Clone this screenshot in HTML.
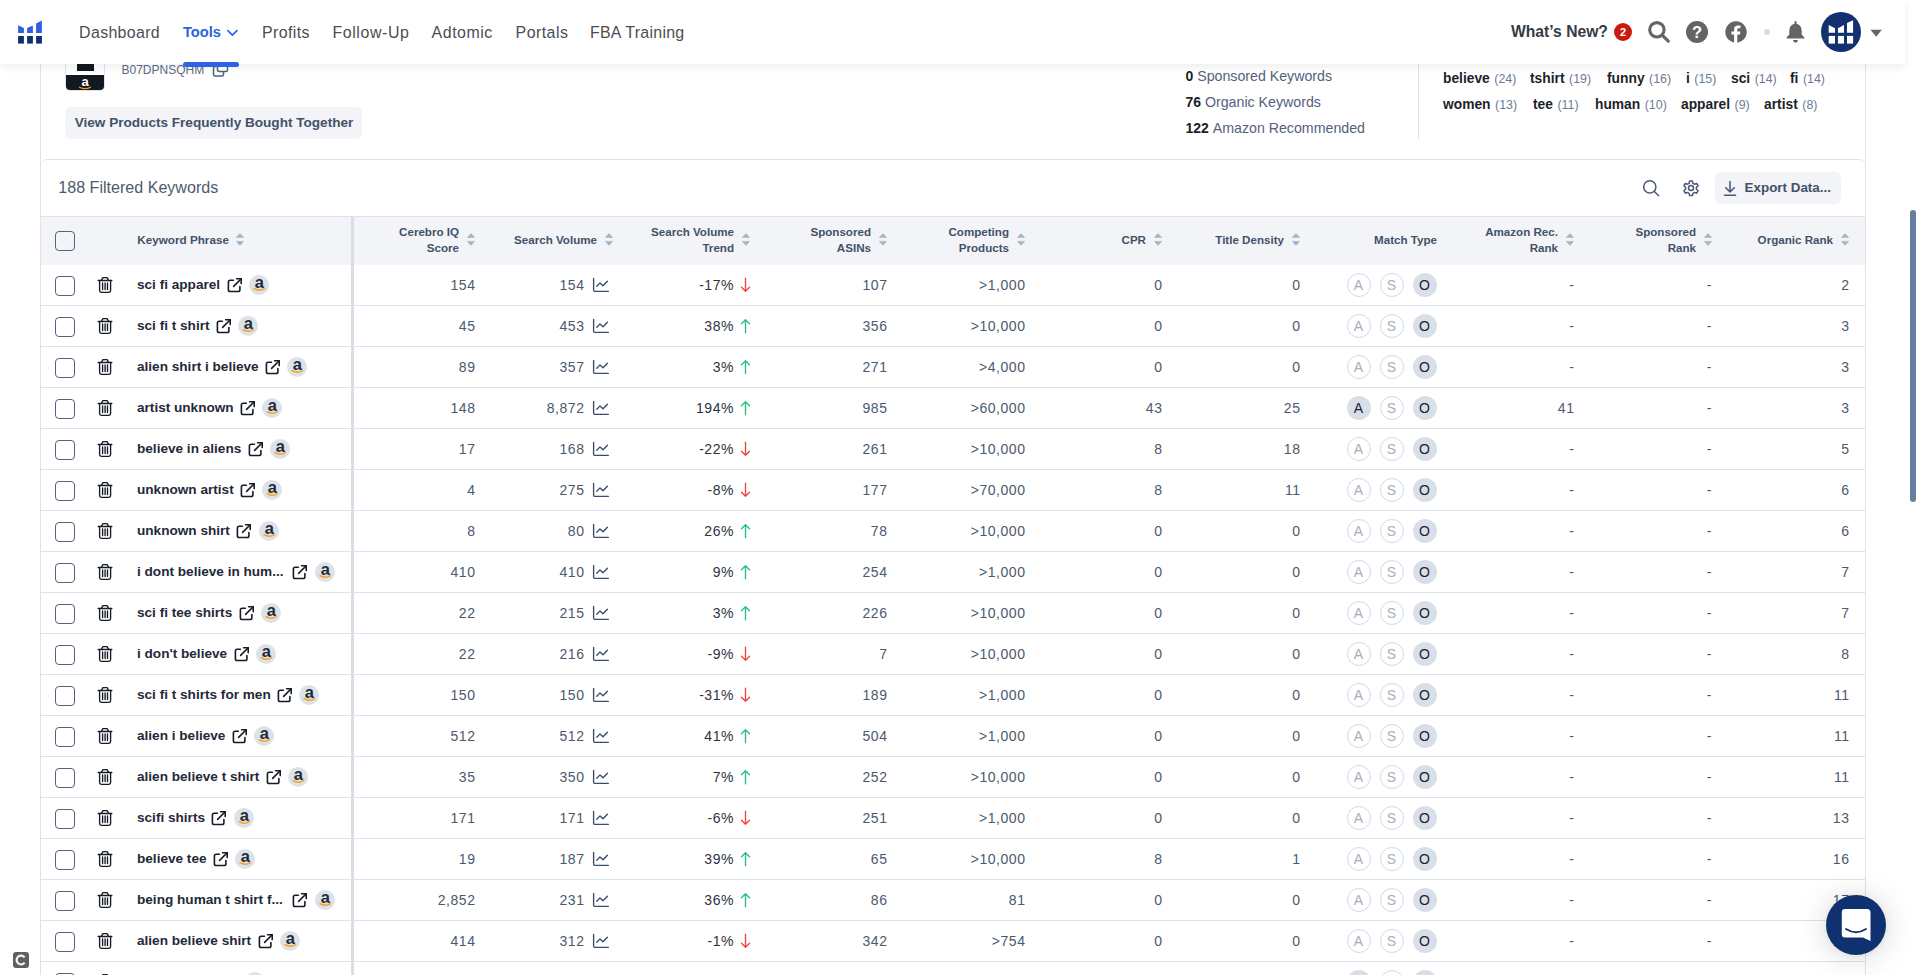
<!DOCTYPE html>
<html><head><meta charset="utf-8"><title>Cerebro</title>
<style>
html,body{margin:0;padding:0;width:1920px;height:975px;overflow:hidden;background:#fff;font-family:"Liberation Sans", sans-serif;}
.t{position:absolute;white-space:nowrap;}
.r{position:absolute;}
.s{position:absolute;overflow:visible;}
.mt{position:absolute;width:24px;height:24px;border-radius:50%;box-sizing:border-box;text-align:center;line-height:22px;font-size:14px;}
</style></head><body>
<div class="r" style="left:40px;top:64px;width:1px;height:911px;background:#dde3eb;"></div>
<div class="r" style="left:1865px;top:64px;width:1px;height:911px;background:#dde3eb;"></div>
<div class="r" style="left:65px;top:40px;width:40px;height:51px;background:#fff;border:1px solid #dfe3ea;border-radius:5px;box-sizing:border-box;overflow:hidden"><div style="position:absolute;left:11px;top:0;width:17px;height:30px;background:#131921"></div><div style="position:absolute;left:-1px;top:34px;width:40px;height:17px;background:#131921;border-radius:0 0 5px 5px"></div></div>
<svg class="s" style="left:65px;top:74px;" width="40" height="17" viewBox="0 0 40 17"><text x="20" y="12" text-anchor="middle" font-family="Liberation Sans" font-weight="700" font-size="13" fill="#fff">a</text><path d="M14.5 13.2 Q20 16.2 25.5 13.2" stroke="#ff9900" stroke-width="1.3" fill="none" stroke-linecap="round"/></svg>
<div class="t" style="left:121.50px;top:64.04px;font-size:12px;line-height:12px;color:#5b6b84;font-weight:400;letter-spacing:0px;">B07DPNSQHM</div>
<svg class="s" style="left:212px;top:62px;" width="18" height="16" viewBox="0 0 18 16"><rect x="1.5" y="4.5" width="10" height="9.5" rx="1.5" fill="none" stroke="#52637e" stroke-width="1.5"/><rect x="5.5" y="1" width="10" height="8.5" rx="1.5" fill="#fff" stroke="#52637e" stroke-width="1.5"/></svg>
<div class="r" style="left:65px;top:107px;width:297px;height:32px;background:#f2f4f7;border-radius:6px"></div>
<div class="t" style="left:74.70px;top:115.50px;font-size:13.58px;line-height:13.58px;color:#435169;font-weight:700;letter-spacing:0px;">View Products Frequently Bought Together</div>
<div class="t" style="left:1185.5px;top:69.15px;font-size:14px;line-height:14px;white-space:nowrap"><span style="font-weight:700;color:#1c1f26">0</span> <span style="color:#53627a;font-size:14.2px">Sponsored Keywords</span></div>
<div class="t" style="left:1185.5px;top:95.15px;font-size:14px;line-height:14px;white-space:nowrap"><span style="font-weight:700;color:#1c1f26">76</span> <span style="color:#53627a;font-size:14.2px">Organic Keywords</span></div>
<div class="t" style="left:1185.5px;top:121.15px;font-size:14px;line-height:14px;white-space:nowrap"><span style="font-weight:700;color:#1c1f26">122</span> <span style="color:#53627a;font-size:14.2px">Amazon Recommended</span></div>
<div class="r" style="left:1418px;top:64px;width:1px;height:75px;background:#dde3eb;"></div>
<div class="t" style="left:1443px;top:72.32px;font-size:13.8px;line-height:13.8px;white-space:nowrap"><span style="font-weight:700;color:#1c1f2b">believe</span><span style="color:#6c7b91;font-size:12.4px;margin-left:4.5px">(24)</span></div>
<div class="t" style="left:1530px;top:72.32px;font-size:13.8px;line-height:13.8px;white-space:nowrap"><span style="font-weight:700;color:#1c1f2b">tshirt</span><span style="color:#6c7b91;font-size:12.4px;margin-left:4.5px">(19)</span></div>
<div class="t" style="left:1607px;top:72.32px;font-size:13.8px;line-height:13.8px;white-space:nowrap"><span style="font-weight:700;color:#1c1f2b">funny</span><span style="color:#6c7b91;font-size:12.4px;margin-left:4.5px">(16)</span></div>
<div class="t" style="left:1686px;top:72.32px;font-size:13.8px;line-height:13.8px;white-space:nowrap"><span style="font-weight:700;color:#1c1f2b">i</span><span style="color:#6c7b91;font-size:12.4px;margin-left:4.5px">(15)</span></div>
<div class="t" style="left:1731px;top:72.32px;font-size:13.8px;line-height:13.8px;white-space:nowrap"><span style="font-weight:700;color:#1c1f2b">sci</span><span style="color:#6c7b91;font-size:12.4px;margin-left:4.5px">(14)</span></div>
<div class="t" style="left:1790px;top:72.32px;font-size:13.8px;line-height:13.8px;white-space:nowrap"><span style="font-weight:700;color:#1c1f2b">fi</span><span style="color:#6c7b91;font-size:12.4px;margin-left:4.5px">(14)</span></div>
<div class="t" style="left:1443px;top:98.32px;font-size:13.8px;line-height:13.8px;white-space:nowrap"><span style="font-weight:700;color:#1c1f2b">women</span><span style="color:#6c7b91;font-size:12.4px;margin-left:4.5px">(13)</span></div>
<div class="t" style="left:1533px;top:98.32px;font-size:13.8px;line-height:13.8px;white-space:nowrap"><span style="font-weight:700;color:#1c1f2b">tee</span><span style="color:#6c7b91;font-size:12.4px;margin-left:4.5px">(11)</span></div>
<div class="t" style="left:1595px;top:98.32px;font-size:13.8px;line-height:13.8px;white-space:nowrap"><span style="font-weight:700;color:#1c1f2b">human</span><span style="color:#6c7b91;font-size:12.4px;margin-left:4.5px">(10)</span></div>
<div class="t" style="left:1681px;top:98.32px;font-size:13.8px;line-height:13.8px;white-space:nowrap"><span style="font-weight:700;color:#1c1f2b">apparel</span><span style="color:#6c7b91;font-size:12.4px;margin-left:4.5px">(9)</span></div>
<div class="t" style="left:1764px;top:98.32px;font-size:13.8px;line-height:13.8px;white-space:nowrap"><span style="font-weight:700;color:#1c1f2b">artist</span><span style="color:#6c7b91;font-size:12.4px;margin-left:4.5px">(8)</span></div>
<div class="r" style="left:41px;top:159px;width:1824px;height:900px;border-top:1px solid #dde3eb;border-radius:6px 6px 0 0;box-sizing:border-box"></div>
<div class="t" style="left:58.30px;top:179.39px;font-size:16.08px;line-height:16.08px;color:#4d5b70;font-weight:400;letter-spacing:0px;">188 Filtered Keywords</div>
<svg class="s" style="left:1641px;top:178px;" width="20" height="20" viewBox="0 0 20 20"><circle cx="8.8" cy="8.9" r="6.1" fill="none" stroke="#4a5a76" stroke-width="1.5"/><path d="M13.4 13.5 L17.6 17.7" stroke="#4a5a76" stroke-width="1.5" stroke-linecap="round"/></svg>
<svg class="s" style="left:1681px;top:179px;" width="20" height="20" viewBox="0 0 20 20"><g fill="none" stroke="#4a5a76" stroke-width="1.5" stroke-linejoin="round"><path d="M8.6 1.2h2.8l.5 2.3 1.6.9 2.2-.8 1.4 2.4-1.7 1.6v1.8l1.7 1.6-1.4 2.4-2.2-.8-1.6.9-.5 2.3H8.6l-.5-2.3-1.6-.9-2.2.8-1.4-2.4 1.7-1.6V7.6L2.9 6l1.4-2.4 2.2.8 1.6-.9z" transform="translate(0 0.8)"/><circle cx="10" cy="9.0" r="2.5"/></g></svg>
<div class="r" style="left:1715px;top:172px;width:126px;height:32px;background:#f2f4f7;border-radius:6px"></div>
<svg class="s" style="left:1722px;top:179px;" width="16" height="18" viewBox="0 0 16 18"><path d="M8 2.5V13 M3.8 8.8 L8 13 L12.2 8.8" fill="none" stroke="#4a5a76" stroke-width="1.6" stroke-linecap="round" stroke-linejoin="round"/><path d="M2.5 16.2H13.5" stroke="#4a5a76" stroke-width="1.6" stroke-linecap="round"/></svg>
<div class="t" style="left:1744.60px;top:180.86px;font-size:13.4px;line-height:13.4px;color:#435169;font-weight:700;letter-spacing:0px;">Export Data...</div>
<div class="r" style="left:41px;top:216px;width:1824px;height:1px;background:#dde3eb;"></div>
<div class="r" style="left:41px;top:217px;width:1824px;height:48px;background:#f2f4f7;"></div>
<div class="r" style="left:351px;top:217px;width:3px;height:758px;background:#d8dee7;"></div>
<div class="r" style="left:55px;top:231px;width:20px;height:20px;background:transparent;border:1.5px solid #52637e;border-radius:4px;box-sizing:border-box"></div>
<div class="t" style="left:137.30px;top:234.30px;font-size:11.7px;line-height:11.7px;color:#435168;font-weight:700;letter-spacing:0px;">Keyword Phrase</div>
<svg class="s" style="left:236px;top:233px;" width="8" height="13" viewBox="0 0 8 13"><path d="M4 0.6 L7.6 4.4 H0.4 Z M4 12.4 L7.6 8.4 H0.4 Z" fill="#a6b3c5" stroke="#a6b3c5" stroke-width="0.6" stroke-linejoin="round"/></svg>
<svg class="s" style="left:467px;top:233px;" width="8" height="13" viewBox="0 0 8 13"><path d="M4 0.6 L7.6 4.4 H0.4 Z M4 12.4 L7.6 8.4 H0.4 Z" fill="#a6b3c5" stroke="#a6b3c5" stroke-width="0.6" stroke-linejoin="round"/></svg>
<div class="t" style="right:1461.00px;top:226.38px;font-size:11.6px;line-height:11.6px;color:#435168;font-weight:700;letter-spacing:0px;">Cerebro IQ</div>
<div class="t" style="right:1461.00px;top:241.88px;font-size:11.6px;line-height:11.6px;color:#435168;font-weight:700;letter-spacing:0px;">Score</div>
<svg class="s" style="left:605px;top:233px;" width="8" height="13" viewBox="0 0 8 13"><path d="M4 0.6 L7.6 4.4 H0.4 Z M4 12.4 L7.6 8.4 H0.4 Z" fill="#a6b3c5" stroke="#a6b3c5" stroke-width="0.6" stroke-linejoin="round"/></svg>
<div class="t" style="right:1323.00px;top:234.38px;font-size:11.6px;line-height:11.6px;color:#435168;font-weight:700;letter-spacing:0px;">Search Volume</div>
<svg class="s" style="left:742px;top:233px;" width="8" height="13" viewBox="0 0 8 13"><path d="M4 0.6 L7.6 4.4 H0.4 Z M4 12.4 L7.6 8.4 H0.4 Z" fill="#a6b3c5" stroke="#a6b3c5" stroke-width="0.6" stroke-linejoin="round"/></svg>
<div class="t" style="right:1186.00px;top:226.38px;font-size:11.6px;line-height:11.6px;color:#435168;font-weight:700;letter-spacing:0px;">Search Volume</div>
<div class="t" style="right:1186.00px;top:241.88px;font-size:11.6px;line-height:11.6px;color:#435168;font-weight:700;letter-spacing:0px;">Trend</div>
<svg class="s" style="left:879px;top:233px;" width="8" height="13" viewBox="0 0 8 13"><path d="M4 0.6 L7.6 4.4 H0.4 Z M4 12.4 L7.6 8.4 H0.4 Z" fill="#a6b3c5" stroke="#a6b3c5" stroke-width="0.6" stroke-linejoin="round"/></svg>
<div class="t" style="right:1049.00px;top:226.38px;font-size:11.6px;line-height:11.6px;color:#435168;font-weight:700;letter-spacing:0px;">Sponsored</div>
<div class="t" style="right:1049.00px;top:241.88px;font-size:11.6px;line-height:11.6px;color:#435168;font-weight:700;letter-spacing:0px;">ASINs</div>
<svg class="s" style="left:1017px;top:233px;" width="8" height="13" viewBox="0 0 8 13"><path d="M4 0.6 L7.6 4.4 H0.4 Z M4 12.4 L7.6 8.4 H0.4 Z" fill="#a6b3c5" stroke="#a6b3c5" stroke-width="0.6" stroke-linejoin="round"/></svg>
<div class="t" style="right:911.00px;top:226.38px;font-size:11.6px;line-height:11.6px;color:#435168;font-weight:700;letter-spacing:0px;">Competing</div>
<div class="t" style="right:911.00px;top:241.88px;font-size:11.6px;line-height:11.6px;color:#435168;font-weight:700;letter-spacing:0px;">Products</div>
<svg class="s" style="left:1154px;top:233px;" width="8" height="13" viewBox="0 0 8 13"><path d="M4 0.6 L7.6 4.4 H0.4 Z M4 12.4 L7.6 8.4 H0.4 Z" fill="#a6b3c5" stroke="#a6b3c5" stroke-width="0.6" stroke-linejoin="round"/></svg>
<div class="t" style="right:774.00px;top:234.38px;font-size:11.6px;line-height:11.6px;color:#435168;font-weight:700;letter-spacing:0px;">CPR</div>
<svg class="s" style="left:1292px;top:233px;" width="8" height="13" viewBox="0 0 8 13"><path d="M4 0.6 L7.6 4.4 H0.4 Z M4 12.4 L7.6 8.4 H0.4 Z" fill="#a6b3c5" stroke="#a6b3c5" stroke-width="0.6" stroke-linejoin="round"/></svg>
<div class="t" style="right:636.00px;top:234.38px;font-size:11.6px;line-height:11.6px;color:#435168;font-weight:700;letter-spacing:0px;">Title Density</div>
<svg class="s" style="left:1566px;top:233px;" width="8" height="13" viewBox="0 0 8 13"><path d="M4 0.6 L7.6 4.4 H0.4 Z M4 12.4 L7.6 8.4 H0.4 Z" fill="#a6b3c5" stroke="#a6b3c5" stroke-width="0.6" stroke-linejoin="round"/></svg>
<div class="t" style="right:362.00px;top:226.38px;font-size:11.6px;line-height:11.6px;color:#435168;font-weight:700;letter-spacing:0px;">Amazon Rec.</div>
<div class="t" style="right:362.00px;top:241.88px;font-size:11.6px;line-height:11.6px;color:#435168;font-weight:700;letter-spacing:0px;">Rank</div>
<svg class="s" style="left:1704px;top:233px;" width="8" height="13" viewBox="0 0 8 13"><path d="M4 0.6 L7.6 4.4 H0.4 Z M4 12.4 L7.6 8.4 H0.4 Z" fill="#a6b3c5" stroke="#a6b3c5" stroke-width="0.6" stroke-linejoin="round"/></svg>
<div class="t" style="right:224.00px;top:226.38px;font-size:11.6px;line-height:11.6px;color:#435168;font-weight:700;letter-spacing:0px;">Sponsored</div>
<div class="t" style="right:224.00px;top:241.88px;font-size:11.6px;line-height:11.6px;color:#435168;font-weight:700;letter-spacing:0px;">Rank</div>
<svg class="s" style="left:1841px;top:233px;" width="8" height="13" viewBox="0 0 8 13"><path d="M4 0.6 L7.6 4.4 H0.4 Z M4 12.4 L7.6 8.4 H0.4 Z" fill="#a6b3c5" stroke="#a6b3c5" stroke-width="0.6" stroke-linejoin="round"/></svg>
<div class="t" style="right:87.00px;top:234.38px;font-size:11.6px;line-height:11.6px;color:#435168;font-weight:700;letter-spacing:0px;">Organic Rank</div>
<div class="t" style="right:483.00px;top:234.38px;font-size:11.6px;line-height:11.6px;color:#435168;font-weight:700;letter-spacing:0px;">Match Type</div>
<div class="r" style="left:41px;top:305px;width:1824px;height:1px;background:#dde3eb;"></div>
<div class="r" style="left:55px;top:276px;width:20px;height:20px;background:transparent;border:1.5px solid #52637e;border-radius:4px;box-sizing:border-box"></div>
<svg class="s" style="left:94px;top:272px;" width="24" height="24" viewBox="0 0 24 24"><g fill="none" stroke="#161b26" stroke-width="1.35" stroke-linecap="round" stroke-linejoin="round"><path d="M4.2 8.5H17.8"/><path d="M7.4 8.3 L8.9 5.6 H13.1 L14.6 8.3"/><path d="M5.6 8.8 V18.6 Q5.6 20.3 7.3 20.3 H14.9 Q16.6 20.3 16.6 18.6 V8.8"/><path d="M8.6 10.9V17.6 M11.1 10.9V17.6 M13.5 10.9V17.6"/></g></svg>
<div class="t kw" style="left:137px;top:277.69px;font-size:13.6px;line-height:13.6px;color:#232938;font-weight:700">sci fi apparel<span style="display:inline-block;position:relative;width:14px;height:10px;margin-left:8px"><svg style="position:absolute;left:-5.6px;top:-6.8px" width="24" height="24" viewBox="0 0 24 24"><g fill="none" stroke="#161b26" stroke-width="1.6" stroke-linecap="round" stroke-linejoin="round"><path d="M10.4 8.3 H7.2 Q5.4 8.3 5.4 10.1 V17.7 Q5.4 19.5 7.2 19.5 H15.1 Q16.9 19.5 16.9 17.7 V14.6"/><path d="M10.6 14.4 L18.2 6.8"/><path d="M13.6 6.8 H18.2 V11.6"/></g></svg></span><span style="display:inline-block;position:relative;width:20px;height:10px;margin-left:6px"><svg style="position:absolute;left:0.7px;top:-4px" width="20" height="20" viewBox="0 0 20 20"><circle cx="10" cy="10" r="10" fill="#dce2ea"/><text x="10.3" y="13.2" text-anchor="middle" font-family="Liberation Sans" font-weight="700" font-size="16.5" fill="#232a35">a</text><path d="M5 13.7 Q10.3 16.9 15.4 13.6" stroke="#ff9d12" stroke-width="1.4" fill="none" stroke-linecap="round"/></svg></span></div>
<div class="t" style="right:1444.45px;top:278.13px;font-size:14.02px;line-height:14.02px;color:#4b596d;font-weight:400;letter-spacing:0.55px;">154</div>
<div class="t" style="right:1335.45px;top:278.13px;font-size:14.02px;line-height:14.02px;color:#4b596d;font-weight:400;letter-spacing:0.55px;">154</div>
<svg class="s" style="left:589px;top:274px;" width="24" height="24" viewBox="0 0 24 24"><g fill="none" stroke="#3b4c69" stroke-width="1.35" stroke-linecap="round" stroke-linejoin="round"><path d="M4.6 4.4 V16.3 Q4.6 17.3 5.6 17.3 H19.4"/><path d="M7.8 12.3 L11 8.9 L14 11.8 L18.4 7.3"/></g></svg>
<div class="t" style="right:1185.95px;top:278.13px;font-size:14.02px;line-height:14.02px;color:#2b3342;font-weight:400;letter-spacing:0.55px;">-17%</div>
<svg class="s" style="left:735px;top:274px;" width="21" height="24" viewBox="0 0 21 24"><g fill="none" stroke="#f0443a" stroke-width="1.35" stroke-linecap="round" stroke-linejoin="round"><path d="M10.5 4.2V17.2 M6.5 13.3 L10.5 17.2 L14.5 13.3"/></g></svg>
<div class="t" style="right:1032.45px;top:278.13px;font-size:14.02px;line-height:14.02px;color:#4b596d;font-weight:400;letter-spacing:0.55px;">107</div>
<div class="t" style="right:894.45px;top:278.13px;font-size:14.02px;line-height:14.02px;color:#4b596d;font-weight:400;letter-spacing:0.55px;">>1,000</div>
<div class="t" style="right:757.45px;top:278.13px;font-size:14.02px;line-height:14.02px;color:#4b596d;font-weight:400;letter-spacing:0.55px;">0</div>
<div class="t" style="right:619.45px;top:278.13px;font-size:14.02px;line-height:14.02px;color:#4b596d;font-weight:400;letter-spacing:0.55px;">0</div>
<div class="mt" style="left:1346.5px;top:273px;border:1px solid #d3dae4;color:#a3b0c2">A</div>
<div class="mt" style="left:1379.5px;top:273px;border:1px solid #d3dae4;color:#a3b0c2">S</div>
<div class="mt" style="left:1412.5px;top:273px;background:#d9dfe8;color:#1b2130;line-height:24px">O</div>
<div class="t" style="right:345.45px;top:278.13px;font-size:14.02px;line-height:14.02px;color:#4b596d;font-weight:400;letter-spacing:0.55px;">-</div>
<div class="t" style="right:207.95px;top:278.13px;font-size:14.02px;line-height:14.02px;color:#4b596d;font-weight:400;letter-spacing:0.55px;">-</div>
<div class="t" style="right:70.45px;top:278.13px;font-size:14.02px;line-height:14.02px;color:#4b596d;font-weight:400;letter-spacing:0.55px;">2</div>
<div class="r" style="left:41px;top:346px;width:1824px;height:1px;background:#dde3eb;"></div>
<div class="r" style="left:55px;top:317px;width:20px;height:20px;background:transparent;border:1.5px solid #52637e;border-radius:4px;box-sizing:border-box"></div>
<svg class="s" style="left:94px;top:313px;" width="24" height="24" viewBox="0 0 24 24"><g fill="none" stroke="#161b26" stroke-width="1.35" stroke-linecap="round" stroke-linejoin="round"><path d="M4.2 8.5H17.8"/><path d="M7.4 8.3 L8.9 5.6 H13.1 L14.6 8.3"/><path d="M5.6 8.8 V18.6 Q5.6 20.3 7.3 20.3 H14.9 Q16.6 20.3 16.6 18.6 V8.8"/><path d="M8.6 10.9V17.6 M11.1 10.9V17.6 M13.5 10.9V17.6"/></g></svg>
<div class="t kw" style="left:137px;top:318.69px;font-size:13.6px;line-height:13.6px;color:#232938;font-weight:700">sci fi t shirt<span style="display:inline-block;position:relative;width:14px;height:10px;margin-left:8px"><svg style="position:absolute;left:-5.6px;top:-6.8px" width="24" height="24" viewBox="0 0 24 24"><g fill="none" stroke="#161b26" stroke-width="1.6" stroke-linecap="round" stroke-linejoin="round"><path d="M10.4 8.3 H7.2 Q5.4 8.3 5.4 10.1 V17.7 Q5.4 19.5 7.2 19.5 H15.1 Q16.9 19.5 16.9 17.7 V14.6"/><path d="M10.6 14.4 L18.2 6.8"/><path d="M13.6 6.8 H18.2 V11.6"/></g></svg></span><span style="display:inline-block;position:relative;width:20px;height:10px;margin-left:6px"><svg style="position:absolute;left:0.7px;top:-4px" width="20" height="20" viewBox="0 0 20 20"><circle cx="10" cy="10" r="10" fill="#dce2ea"/><text x="10.3" y="13.2" text-anchor="middle" font-family="Liberation Sans" font-weight="700" font-size="16.5" fill="#232a35">a</text><path d="M5 13.7 Q10.3 16.9 15.4 13.6" stroke="#ff9d12" stroke-width="1.4" fill="none" stroke-linecap="round"/></svg></span></div>
<div class="t" style="right:1444.45px;top:319.13px;font-size:14.02px;line-height:14.02px;color:#4b596d;font-weight:400;letter-spacing:0.55px;">45</div>
<div class="t" style="right:1335.45px;top:319.13px;font-size:14.02px;line-height:14.02px;color:#4b596d;font-weight:400;letter-spacing:0.55px;">453</div>
<svg class="s" style="left:589px;top:315px;" width="24" height="24" viewBox="0 0 24 24"><g fill="none" stroke="#3b4c69" stroke-width="1.35" stroke-linecap="round" stroke-linejoin="round"><path d="M4.6 4.4 V16.3 Q4.6 17.3 5.6 17.3 H19.4"/><path d="M7.8 12.3 L11 8.9 L14 11.8 L18.4 7.3"/></g></svg>
<div class="t" style="right:1185.95px;top:319.13px;font-size:14.02px;line-height:14.02px;color:#2b3342;font-weight:400;letter-spacing:0.55px;">38%</div>
<svg class="s" style="left:735px;top:315px;" width="21" height="24" viewBox="0 0 21 24"><g fill="none" stroke="#27c07d" stroke-width="1.35" stroke-linecap="round" stroke-linejoin="round"><path d="M10.5 4.8V17.8 M6.5 8.7 L10.5 4.8 L14.5 8.7"/></g></svg>
<div class="t" style="right:1032.45px;top:319.13px;font-size:14.02px;line-height:14.02px;color:#4b596d;font-weight:400;letter-spacing:0.55px;">356</div>
<div class="t" style="right:894.45px;top:319.13px;font-size:14.02px;line-height:14.02px;color:#4b596d;font-weight:400;letter-spacing:0.55px;">>10,000</div>
<div class="t" style="right:757.45px;top:319.13px;font-size:14.02px;line-height:14.02px;color:#4b596d;font-weight:400;letter-spacing:0.55px;">0</div>
<div class="t" style="right:619.45px;top:319.13px;font-size:14.02px;line-height:14.02px;color:#4b596d;font-weight:400;letter-spacing:0.55px;">0</div>
<div class="mt" style="left:1346.5px;top:314px;border:1px solid #d3dae4;color:#a3b0c2">A</div>
<div class="mt" style="left:1379.5px;top:314px;border:1px solid #d3dae4;color:#a3b0c2">S</div>
<div class="mt" style="left:1412.5px;top:314px;background:#d9dfe8;color:#1b2130;line-height:24px">O</div>
<div class="t" style="right:345.45px;top:319.13px;font-size:14.02px;line-height:14.02px;color:#4b596d;font-weight:400;letter-spacing:0.55px;">-</div>
<div class="t" style="right:207.95px;top:319.13px;font-size:14.02px;line-height:14.02px;color:#4b596d;font-weight:400;letter-spacing:0.55px;">-</div>
<div class="t" style="right:70.45px;top:319.13px;font-size:14.02px;line-height:14.02px;color:#4b596d;font-weight:400;letter-spacing:0.55px;">3</div>
<div class="r" style="left:41px;top:387px;width:1824px;height:1px;background:#dde3eb;"></div>
<div class="r" style="left:55px;top:358px;width:20px;height:20px;background:transparent;border:1.5px solid #52637e;border-radius:4px;box-sizing:border-box"></div>
<svg class="s" style="left:94px;top:354px;" width="24" height="24" viewBox="0 0 24 24"><g fill="none" stroke="#161b26" stroke-width="1.35" stroke-linecap="round" stroke-linejoin="round"><path d="M4.2 8.5H17.8"/><path d="M7.4 8.3 L8.9 5.6 H13.1 L14.6 8.3"/><path d="M5.6 8.8 V18.6 Q5.6 20.3 7.3 20.3 H14.9 Q16.6 20.3 16.6 18.6 V8.8"/><path d="M8.6 10.9V17.6 M11.1 10.9V17.6 M13.5 10.9V17.6"/></g></svg>
<div class="t kw" style="left:137px;top:359.69px;font-size:13.6px;line-height:13.6px;color:#232938;font-weight:700">alien shirt i believe<span style="display:inline-block;position:relative;width:14px;height:10px;margin-left:8px"><svg style="position:absolute;left:-5.6px;top:-6.8px" width="24" height="24" viewBox="0 0 24 24"><g fill="none" stroke="#161b26" stroke-width="1.6" stroke-linecap="round" stroke-linejoin="round"><path d="M10.4 8.3 H7.2 Q5.4 8.3 5.4 10.1 V17.7 Q5.4 19.5 7.2 19.5 H15.1 Q16.9 19.5 16.9 17.7 V14.6"/><path d="M10.6 14.4 L18.2 6.8"/><path d="M13.6 6.8 H18.2 V11.6"/></g></svg></span><span style="display:inline-block;position:relative;width:20px;height:10px;margin-left:6px"><svg style="position:absolute;left:0.7px;top:-4px" width="20" height="20" viewBox="0 0 20 20"><circle cx="10" cy="10" r="10" fill="#dce2ea"/><text x="10.3" y="13.2" text-anchor="middle" font-family="Liberation Sans" font-weight="700" font-size="16.5" fill="#232a35">a</text><path d="M5 13.7 Q10.3 16.9 15.4 13.6" stroke="#ff9d12" stroke-width="1.4" fill="none" stroke-linecap="round"/></svg></span></div>
<div class="t" style="right:1444.45px;top:360.13px;font-size:14.02px;line-height:14.02px;color:#4b596d;font-weight:400;letter-spacing:0.55px;">89</div>
<div class="t" style="right:1335.45px;top:360.13px;font-size:14.02px;line-height:14.02px;color:#4b596d;font-weight:400;letter-spacing:0.55px;">357</div>
<svg class="s" style="left:589px;top:356px;" width="24" height="24" viewBox="0 0 24 24"><g fill="none" stroke="#3b4c69" stroke-width="1.35" stroke-linecap="round" stroke-linejoin="round"><path d="M4.6 4.4 V16.3 Q4.6 17.3 5.6 17.3 H19.4"/><path d="M7.8 12.3 L11 8.9 L14 11.8 L18.4 7.3"/></g></svg>
<div class="t" style="right:1185.95px;top:360.13px;font-size:14.02px;line-height:14.02px;color:#2b3342;font-weight:400;letter-spacing:0.55px;">3%</div>
<svg class="s" style="left:735px;top:356px;" width="21" height="24" viewBox="0 0 21 24"><g fill="none" stroke="#27c07d" stroke-width="1.35" stroke-linecap="round" stroke-linejoin="round"><path d="M10.5 4.8V17.8 M6.5 8.7 L10.5 4.8 L14.5 8.7"/></g></svg>
<div class="t" style="right:1032.45px;top:360.13px;font-size:14.02px;line-height:14.02px;color:#4b596d;font-weight:400;letter-spacing:0.55px;">271</div>
<div class="t" style="right:894.45px;top:360.13px;font-size:14.02px;line-height:14.02px;color:#4b596d;font-weight:400;letter-spacing:0.55px;">>4,000</div>
<div class="t" style="right:757.45px;top:360.13px;font-size:14.02px;line-height:14.02px;color:#4b596d;font-weight:400;letter-spacing:0.55px;">0</div>
<div class="t" style="right:619.45px;top:360.13px;font-size:14.02px;line-height:14.02px;color:#4b596d;font-weight:400;letter-spacing:0.55px;">0</div>
<div class="mt" style="left:1346.5px;top:355px;border:1px solid #d3dae4;color:#a3b0c2">A</div>
<div class="mt" style="left:1379.5px;top:355px;border:1px solid #d3dae4;color:#a3b0c2">S</div>
<div class="mt" style="left:1412.5px;top:355px;background:#d9dfe8;color:#1b2130;line-height:24px">O</div>
<div class="t" style="right:345.45px;top:360.13px;font-size:14.02px;line-height:14.02px;color:#4b596d;font-weight:400;letter-spacing:0.55px;">-</div>
<div class="t" style="right:207.95px;top:360.13px;font-size:14.02px;line-height:14.02px;color:#4b596d;font-weight:400;letter-spacing:0.55px;">-</div>
<div class="t" style="right:70.45px;top:360.13px;font-size:14.02px;line-height:14.02px;color:#4b596d;font-weight:400;letter-spacing:0.55px;">3</div>
<div class="r" style="left:41px;top:428px;width:1824px;height:1px;background:#dde3eb;"></div>
<div class="r" style="left:55px;top:399px;width:20px;height:20px;background:transparent;border:1.5px solid #52637e;border-radius:4px;box-sizing:border-box"></div>
<svg class="s" style="left:94px;top:395px;" width="24" height="24" viewBox="0 0 24 24"><g fill="none" stroke="#161b26" stroke-width="1.35" stroke-linecap="round" stroke-linejoin="round"><path d="M4.2 8.5H17.8"/><path d="M7.4 8.3 L8.9 5.6 H13.1 L14.6 8.3"/><path d="M5.6 8.8 V18.6 Q5.6 20.3 7.3 20.3 H14.9 Q16.6 20.3 16.6 18.6 V8.8"/><path d="M8.6 10.9V17.6 M11.1 10.9V17.6 M13.5 10.9V17.6"/></g></svg>
<div class="t kw" style="left:137px;top:400.69px;font-size:13.6px;line-height:13.6px;color:#232938;font-weight:700">artist unknown<span style="display:inline-block;position:relative;width:14px;height:10px;margin-left:8px"><svg style="position:absolute;left:-5.6px;top:-6.8px" width="24" height="24" viewBox="0 0 24 24"><g fill="none" stroke="#161b26" stroke-width="1.6" stroke-linecap="round" stroke-linejoin="round"><path d="M10.4 8.3 H7.2 Q5.4 8.3 5.4 10.1 V17.7 Q5.4 19.5 7.2 19.5 H15.1 Q16.9 19.5 16.9 17.7 V14.6"/><path d="M10.6 14.4 L18.2 6.8"/><path d="M13.6 6.8 H18.2 V11.6"/></g></svg></span><span style="display:inline-block;position:relative;width:20px;height:10px;margin-left:6px"><svg style="position:absolute;left:0.7px;top:-4px" width="20" height="20" viewBox="0 0 20 20"><circle cx="10" cy="10" r="10" fill="#dce2ea"/><text x="10.3" y="13.2" text-anchor="middle" font-family="Liberation Sans" font-weight="700" font-size="16.5" fill="#232a35">a</text><path d="M5 13.7 Q10.3 16.9 15.4 13.6" stroke="#ff9d12" stroke-width="1.4" fill="none" stroke-linecap="round"/></svg></span></div>
<div class="t" style="right:1444.45px;top:401.13px;font-size:14.02px;line-height:14.02px;color:#4b596d;font-weight:400;letter-spacing:0.55px;">148</div>
<div class="t" style="right:1335.45px;top:401.13px;font-size:14.02px;line-height:14.02px;color:#4b596d;font-weight:400;letter-spacing:0.55px;">8,872</div>
<svg class="s" style="left:589px;top:397px;" width="24" height="24" viewBox="0 0 24 24"><g fill="none" stroke="#3b4c69" stroke-width="1.35" stroke-linecap="round" stroke-linejoin="round"><path d="M4.6 4.4 V16.3 Q4.6 17.3 5.6 17.3 H19.4"/><path d="M7.8 12.3 L11 8.9 L14 11.8 L18.4 7.3"/></g></svg>
<div class="t" style="right:1185.95px;top:401.13px;font-size:14.02px;line-height:14.02px;color:#2b3342;font-weight:400;letter-spacing:0.55px;">194%</div>
<svg class="s" style="left:735px;top:397px;" width="21" height="24" viewBox="0 0 21 24"><g fill="none" stroke="#27c07d" stroke-width="1.35" stroke-linecap="round" stroke-linejoin="round"><path d="M10.5 4.8V17.8 M6.5 8.7 L10.5 4.8 L14.5 8.7"/></g></svg>
<div class="t" style="right:1032.45px;top:401.13px;font-size:14.02px;line-height:14.02px;color:#4b596d;font-weight:400;letter-spacing:0.55px;">985</div>
<div class="t" style="right:894.45px;top:401.13px;font-size:14.02px;line-height:14.02px;color:#4b596d;font-weight:400;letter-spacing:0.55px;">>60,000</div>
<div class="t" style="right:757.45px;top:401.13px;font-size:14.02px;line-height:14.02px;color:#4b596d;font-weight:400;letter-spacing:0.55px;">43</div>
<div class="t" style="right:619.45px;top:401.13px;font-size:14.02px;line-height:14.02px;color:#4b596d;font-weight:400;letter-spacing:0.55px;">25</div>
<div class="mt" style="left:1346.5px;top:396px;background:#d9dfe8;color:#1b2130;line-height:24px">A</div>
<div class="mt" style="left:1379.5px;top:396px;border:1px solid #d3dae4;color:#a3b0c2">S</div>
<div class="mt" style="left:1412.5px;top:396px;background:#d9dfe8;color:#1b2130;line-height:24px">O</div>
<div class="t" style="right:345.45px;top:401.13px;font-size:14.02px;line-height:14.02px;color:#4b596d;font-weight:400;letter-spacing:0.55px;">41</div>
<div class="t" style="right:207.95px;top:401.13px;font-size:14.02px;line-height:14.02px;color:#4b596d;font-weight:400;letter-spacing:0.55px;">-</div>
<div class="t" style="right:70.45px;top:401.13px;font-size:14.02px;line-height:14.02px;color:#4b596d;font-weight:400;letter-spacing:0.55px;">3</div>
<div class="r" style="left:41px;top:469px;width:1824px;height:1px;background:#dde3eb;"></div>
<div class="r" style="left:55px;top:440px;width:20px;height:20px;background:transparent;border:1.5px solid #52637e;border-radius:4px;box-sizing:border-box"></div>
<svg class="s" style="left:94px;top:436px;" width="24" height="24" viewBox="0 0 24 24"><g fill="none" stroke="#161b26" stroke-width="1.35" stroke-linecap="round" stroke-linejoin="round"><path d="M4.2 8.5H17.8"/><path d="M7.4 8.3 L8.9 5.6 H13.1 L14.6 8.3"/><path d="M5.6 8.8 V18.6 Q5.6 20.3 7.3 20.3 H14.9 Q16.6 20.3 16.6 18.6 V8.8"/><path d="M8.6 10.9V17.6 M11.1 10.9V17.6 M13.5 10.9V17.6"/></g></svg>
<div class="t kw" style="left:137px;top:441.69px;font-size:13.6px;line-height:13.6px;color:#232938;font-weight:700">believe in aliens<span style="display:inline-block;position:relative;width:14px;height:10px;margin-left:8px"><svg style="position:absolute;left:-5.6px;top:-6.8px" width="24" height="24" viewBox="0 0 24 24"><g fill="none" stroke="#161b26" stroke-width="1.6" stroke-linecap="round" stroke-linejoin="round"><path d="M10.4 8.3 H7.2 Q5.4 8.3 5.4 10.1 V17.7 Q5.4 19.5 7.2 19.5 H15.1 Q16.9 19.5 16.9 17.7 V14.6"/><path d="M10.6 14.4 L18.2 6.8"/><path d="M13.6 6.8 H18.2 V11.6"/></g></svg></span><span style="display:inline-block;position:relative;width:20px;height:10px;margin-left:6px"><svg style="position:absolute;left:0.7px;top:-4px" width="20" height="20" viewBox="0 0 20 20"><circle cx="10" cy="10" r="10" fill="#dce2ea"/><text x="10.3" y="13.2" text-anchor="middle" font-family="Liberation Sans" font-weight="700" font-size="16.5" fill="#232a35">a</text><path d="M5 13.7 Q10.3 16.9 15.4 13.6" stroke="#ff9d12" stroke-width="1.4" fill="none" stroke-linecap="round"/></svg></span></div>
<div class="t" style="right:1444.45px;top:442.13px;font-size:14.02px;line-height:14.02px;color:#4b596d;font-weight:400;letter-spacing:0.55px;">17</div>
<div class="t" style="right:1335.45px;top:442.13px;font-size:14.02px;line-height:14.02px;color:#4b596d;font-weight:400;letter-spacing:0.55px;">168</div>
<svg class="s" style="left:589px;top:438px;" width="24" height="24" viewBox="0 0 24 24"><g fill="none" stroke="#3b4c69" stroke-width="1.35" stroke-linecap="round" stroke-linejoin="round"><path d="M4.6 4.4 V16.3 Q4.6 17.3 5.6 17.3 H19.4"/><path d="M7.8 12.3 L11 8.9 L14 11.8 L18.4 7.3"/></g></svg>
<div class="t" style="right:1185.95px;top:442.13px;font-size:14.02px;line-height:14.02px;color:#2b3342;font-weight:400;letter-spacing:0.55px;">-22%</div>
<svg class="s" style="left:735px;top:438px;" width="21" height="24" viewBox="0 0 21 24"><g fill="none" stroke="#f0443a" stroke-width="1.35" stroke-linecap="round" stroke-linejoin="round"><path d="M10.5 4.2V17.2 M6.5 13.3 L10.5 17.2 L14.5 13.3"/></g></svg>
<div class="t" style="right:1032.45px;top:442.13px;font-size:14.02px;line-height:14.02px;color:#4b596d;font-weight:400;letter-spacing:0.55px;">261</div>
<div class="t" style="right:894.45px;top:442.13px;font-size:14.02px;line-height:14.02px;color:#4b596d;font-weight:400;letter-spacing:0.55px;">>10,000</div>
<div class="t" style="right:757.45px;top:442.13px;font-size:14.02px;line-height:14.02px;color:#4b596d;font-weight:400;letter-spacing:0.55px;">8</div>
<div class="t" style="right:619.45px;top:442.13px;font-size:14.02px;line-height:14.02px;color:#4b596d;font-weight:400;letter-spacing:0.55px;">18</div>
<div class="mt" style="left:1346.5px;top:437px;border:1px solid #d3dae4;color:#a3b0c2">A</div>
<div class="mt" style="left:1379.5px;top:437px;border:1px solid #d3dae4;color:#a3b0c2">S</div>
<div class="mt" style="left:1412.5px;top:437px;background:#d9dfe8;color:#1b2130;line-height:24px">O</div>
<div class="t" style="right:345.45px;top:442.13px;font-size:14.02px;line-height:14.02px;color:#4b596d;font-weight:400;letter-spacing:0.55px;">-</div>
<div class="t" style="right:207.95px;top:442.13px;font-size:14.02px;line-height:14.02px;color:#4b596d;font-weight:400;letter-spacing:0.55px;">-</div>
<div class="t" style="right:70.45px;top:442.13px;font-size:14.02px;line-height:14.02px;color:#4b596d;font-weight:400;letter-spacing:0.55px;">5</div>
<div class="r" style="left:41px;top:510px;width:1824px;height:1px;background:#dde3eb;"></div>
<div class="r" style="left:55px;top:481px;width:20px;height:20px;background:transparent;border:1.5px solid #52637e;border-radius:4px;box-sizing:border-box"></div>
<svg class="s" style="left:94px;top:477px;" width="24" height="24" viewBox="0 0 24 24"><g fill="none" stroke="#161b26" stroke-width="1.35" stroke-linecap="round" stroke-linejoin="round"><path d="M4.2 8.5H17.8"/><path d="M7.4 8.3 L8.9 5.6 H13.1 L14.6 8.3"/><path d="M5.6 8.8 V18.6 Q5.6 20.3 7.3 20.3 H14.9 Q16.6 20.3 16.6 18.6 V8.8"/><path d="M8.6 10.9V17.6 M11.1 10.9V17.6 M13.5 10.9V17.6"/></g></svg>
<div class="t kw" style="left:137px;top:482.69px;font-size:13.6px;line-height:13.6px;color:#232938;font-weight:700">unknown artist<span style="display:inline-block;position:relative;width:14px;height:10px;margin-left:8px"><svg style="position:absolute;left:-5.6px;top:-6.8px" width="24" height="24" viewBox="0 0 24 24"><g fill="none" stroke="#161b26" stroke-width="1.6" stroke-linecap="round" stroke-linejoin="round"><path d="M10.4 8.3 H7.2 Q5.4 8.3 5.4 10.1 V17.7 Q5.4 19.5 7.2 19.5 H15.1 Q16.9 19.5 16.9 17.7 V14.6"/><path d="M10.6 14.4 L18.2 6.8"/><path d="M13.6 6.8 H18.2 V11.6"/></g></svg></span><span style="display:inline-block;position:relative;width:20px;height:10px;margin-left:6px"><svg style="position:absolute;left:0.7px;top:-4px" width="20" height="20" viewBox="0 0 20 20"><circle cx="10" cy="10" r="10" fill="#dce2ea"/><text x="10.3" y="13.2" text-anchor="middle" font-family="Liberation Sans" font-weight="700" font-size="16.5" fill="#232a35">a</text><path d="M5 13.7 Q10.3 16.9 15.4 13.6" stroke="#ff9d12" stroke-width="1.4" fill="none" stroke-linecap="round"/></svg></span></div>
<div class="t" style="right:1444.45px;top:483.13px;font-size:14.02px;line-height:14.02px;color:#4b596d;font-weight:400;letter-spacing:0.55px;">4</div>
<div class="t" style="right:1335.45px;top:483.13px;font-size:14.02px;line-height:14.02px;color:#4b596d;font-weight:400;letter-spacing:0.55px;">275</div>
<svg class="s" style="left:589px;top:479px;" width="24" height="24" viewBox="0 0 24 24"><g fill="none" stroke="#3b4c69" stroke-width="1.35" stroke-linecap="round" stroke-linejoin="round"><path d="M4.6 4.4 V16.3 Q4.6 17.3 5.6 17.3 H19.4"/><path d="M7.8 12.3 L11 8.9 L14 11.8 L18.4 7.3"/></g></svg>
<div class="t" style="right:1185.95px;top:483.13px;font-size:14.02px;line-height:14.02px;color:#2b3342;font-weight:400;letter-spacing:0.55px;">-8%</div>
<svg class="s" style="left:735px;top:479px;" width="21" height="24" viewBox="0 0 21 24"><g fill="none" stroke="#f0443a" stroke-width="1.35" stroke-linecap="round" stroke-linejoin="round"><path d="M10.5 4.2V17.2 M6.5 13.3 L10.5 17.2 L14.5 13.3"/></g></svg>
<div class="t" style="right:1032.45px;top:483.13px;font-size:14.02px;line-height:14.02px;color:#4b596d;font-weight:400;letter-spacing:0.55px;">177</div>
<div class="t" style="right:894.45px;top:483.13px;font-size:14.02px;line-height:14.02px;color:#4b596d;font-weight:400;letter-spacing:0.55px;">>70,000</div>
<div class="t" style="right:757.45px;top:483.13px;font-size:14.02px;line-height:14.02px;color:#4b596d;font-weight:400;letter-spacing:0.55px;">8</div>
<div class="t" style="right:619.45px;top:483.13px;font-size:14.02px;line-height:14.02px;color:#4b596d;font-weight:400;letter-spacing:0.55px;">11</div>
<div class="mt" style="left:1346.5px;top:478px;border:1px solid #d3dae4;color:#a3b0c2">A</div>
<div class="mt" style="left:1379.5px;top:478px;border:1px solid #d3dae4;color:#a3b0c2">S</div>
<div class="mt" style="left:1412.5px;top:478px;background:#d9dfe8;color:#1b2130;line-height:24px">O</div>
<div class="t" style="right:345.45px;top:483.13px;font-size:14.02px;line-height:14.02px;color:#4b596d;font-weight:400;letter-spacing:0.55px;">-</div>
<div class="t" style="right:207.95px;top:483.13px;font-size:14.02px;line-height:14.02px;color:#4b596d;font-weight:400;letter-spacing:0.55px;">-</div>
<div class="t" style="right:70.45px;top:483.13px;font-size:14.02px;line-height:14.02px;color:#4b596d;font-weight:400;letter-spacing:0.55px;">6</div>
<div class="r" style="left:41px;top:551px;width:1824px;height:1px;background:#dde3eb;"></div>
<div class="r" style="left:55px;top:522px;width:20px;height:20px;background:transparent;border:1.5px solid #52637e;border-radius:4px;box-sizing:border-box"></div>
<svg class="s" style="left:94px;top:518px;" width="24" height="24" viewBox="0 0 24 24"><g fill="none" stroke="#161b26" stroke-width="1.35" stroke-linecap="round" stroke-linejoin="round"><path d="M4.2 8.5H17.8"/><path d="M7.4 8.3 L8.9 5.6 H13.1 L14.6 8.3"/><path d="M5.6 8.8 V18.6 Q5.6 20.3 7.3 20.3 H14.9 Q16.6 20.3 16.6 18.6 V8.8"/><path d="M8.6 10.9V17.6 M11.1 10.9V17.6 M13.5 10.9V17.6"/></g></svg>
<div class="t kw" style="left:137px;top:523.69px;font-size:13.6px;line-height:13.6px;color:#232938;font-weight:700">unknown shirt<span style="display:inline-block;position:relative;width:14px;height:10px;margin-left:8px"><svg style="position:absolute;left:-5.6px;top:-6.8px" width="24" height="24" viewBox="0 0 24 24"><g fill="none" stroke="#161b26" stroke-width="1.6" stroke-linecap="round" stroke-linejoin="round"><path d="M10.4 8.3 H7.2 Q5.4 8.3 5.4 10.1 V17.7 Q5.4 19.5 7.2 19.5 H15.1 Q16.9 19.5 16.9 17.7 V14.6"/><path d="M10.6 14.4 L18.2 6.8"/><path d="M13.6 6.8 H18.2 V11.6"/></g></svg></span><span style="display:inline-block;position:relative;width:20px;height:10px;margin-left:6px"><svg style="position:absolute;left:0.7px;top:-4px" width="20" height="20" viewBox="0 0 20 20"><circle cx="10" cy="10" r="10" fill="#dce2ea"/><text x="10.3" y="13.2" text-anchor="middle" font-family="Liberation Sans" font-weight="700" font-size="16.5" fill="#232a35">a</text><path d="M5 13.7 Q10.3 16.9 15.4 13.6" stroke="#ff9d12" stroke-width="1.4" fill="none" stroke-linecap="round"/></svg></span></div>
<div class="t" style="right:1444.45px;top:524.13px;font-size:14.02px;line-height:14.02px;color:#4b596d;font-weight:400;letter-spacing:0.55px;">8</div>
<div class="t" style="right:1335.45px;top:524.13px;font-size:14.02px;line-height:14.02px;color:#4b596d;font-weight:400;letter-spacing:0.55px;">80</div>
<svg class="s" style="left:589px;top:520px;" width="24" height="24" viewBox="0 0 24 24"><g fill="none" stroke="#3b4c69" stroke-width="1.35" stroke-linecap="round" stroke-linejoin="round"><path d="M4.6 4.4 V16.3 Q4.6 17.3 5.6 17.3 H19.4"/><path d="M7.8 12.3 L11 8.9 L14 11.8 L18.4 7.3"/></g></svg>
<div class="t" style="right:1185.95px;top:524.13px;font-size:14.02px;line-height:14.02px;color:#2b3342;font-weight:400;letter-spacing:0.55px;">26%</div>
<svg class="s" style="left:735px;top:520px;" width="21" height="24" viewBox="0 0 21 24"><g fill="none" stroke="#27c07d" stroke-width="1.35" stroke-linecap="round" stroke-linejoin="round"><path d="M10.5 4.8V17.8 M6.5 8.7 L10.5 4.8 L14.5 8.7"/></g></svg>
<div class="t" style="right:1032.45px;top:524.13px;font-size:14.02px;line-height:14.02px;color:#4b596d;font-weight:400;letter-spacing:0.55px;">78</div>
<div class="t" style="right:894.45px;top:524.13px;font-size:14.02px;line-height:14.02px;color:#4b596d;font-weight:400;letter-spacing:0.55px;">>10,000</div>
<div class="t" style="right:757.45px;top:524.13px;font-size:14.02px;line-height:14.02px;color:#4b596d;font-weight:400;letter-spacing:0.55px;">0</div>
<div class="t" style="right:619.45px;top:524.13px;font-size:14.02px;line-height:14.02px;color:#4b596d;font-weight:400;letter-spacing:0.55px;">0</div>
<div class="mt" style="left:1346.5px;top:519px;border:1px solid #d3dae4;color:#a3b0c2">A</div>
<div class="mt" style="left:1379.5px;top:519px;border:1px solid #d3dae4;color:#a3b0c2">S</div>
<div class="mt" style="left:1412.5px;top:519px;background:#d9dfe8;color:#1b2130;line-height:24px">O</div>
<div class="t" style="right:345.45px;top:524.13px;font-size:14.02px;line-height:14.02px;color:#4b596d;font-weight:400;letter-spacing:0.55px;">-</div>
<div class="t" style="right:207.95px;top:524.13px;font-size:14.02px;line-height:14.02px;color:#4b596d;font-weight:400;letter-spacing:0.55px;">-</div>
<div class="t" style="right:70.45px;top:524.13px;font-size:14.02px;line-height:14.02px;color:#4b596d;font-weight:400;letter-spacing:0.55px;">6</div>
<div class="r" style="left:41px;top:592px;width:1824px;height:1px;background:#dde3eb;"></div>
<div class="r" style="left:55px;top:563px;width:20px;height:20px;background:transparent;border:1.5px solid #52637e;border-radius:4px;box-sizing:border-box"></div>
<svg class="s" style="left:94px;top:559px;" width="24" height="24" viewBox="0 0 24 24"><g fill="none" stroke="#161b26" stroke-width="1.35" stroke-linecap="round" stroke-linejoin="round"><path d="M4.2 8.5H17.8"/><path d="M7.4 8.3 L8.9 5.6 H13.1 L14.6 8.3"/><path d="M5.6 8.8 V18.6 Q5.6 20.3 7.3 20.3 H14.9 Q16.6 20.3 16.6 18.6 V8.8"/><path d="M8.6 10.9V17.6 M11.1 10.9V17.6 M13.5 10.9V17.6"/></g></svg>
<div class="t kw" style="left:137px;top:564.69px;font-size:13.6px;line-height:13.6px;color:#232938;font-weight:700"><span style="display:inline-block;width:149px">i dont believe in hum...</span><span style="display:inline-block;position:relative;width:14px;height:10px;margin-left:8px"><svg style="position:absolute;left:-5.6px;top:-6.8px" width="24" height="24" viewBox="0 0 24 24"><g fill="none" stroke="#161b26" stroke-width="1.6" stroke-linecap="round" stroke-linejoin="round"><path d="M10.4 8.3 H7.2 Q5.4 8.3 5.4 10.1 V17.7 Q5.4 19.5 7.2 19.5 H15.1 Q16.9 19.5 16.9 17.7 V14.6"/><path d="M10.6 14.4 L18.2 6.8"/><path d="M13.6 6.8 H18.2 V11.6"/></g></svg></span><span style="display:inline-block;position:relative;width:20px;height:10px;margin-left:6px"><svg style="position:absolute;left:0.7px;top:-4px" width="20" height="20" viewBox="0 0 20 20"><circle cx="10" cy="10" r="10" fill="#dce2ea"/><text x="10.3" y="13.2" text-anchor="middle" font-family="Liberation Sans" font-weight="700" font-size="16.5" fill="#232a35">a</text><path d="M5 13.7 Q10.3 16.9 15.4 13.6" stroke="#ff9d12" stroke-width="1.4" fill="none" stroke-linecap="round"/></svg></span></div>
<div class="t" style="right:1444.45px;top:565.13px;font-size:14.02px;line-height:14.02px;color:#4b596d;font-weight:400;letter-spacing:0.55px;">410</div>
<div class="t" style="right:1335.45px;top:565.13px;font-size:14.02px;line-height:14.02px;color:#4b596d;font-weight:400;letter-spacing:0.55px;">410</div>
<svg class="s" style="left:589px;top:561px;" width="24" height="24" viewBox="0 0 24 24"><g fill="none" stroke="#3b4c69" stroke-width="1.35" stroke-linecap="round" stroke-linejoin="round"><path d="M4.6 4.4 V16.3 Q4.6 17.3 5.6 17.3 H19.4"/><path d="M7.8 12.3 L11 8.9 L14 11.8 L18.4 7.3"/></g></svg>
<div class="t" style="right:1185.95px;top:565.13px;font-size:14.02px;line-height:14.02px;color:#2b3342;font-weight:400;letter-spacing:0.55px;">9%</div>
<svg class="s" style="left:735px;top:561px;" width="21" height="24" viewBox="0 0 21 24"><g fill="none" stroke="#27c07d" stroke-width="1.35" stroke-linecap="round" stroke-linejoin="round"><path d="M10.5 4.8V17.8 M6.5 8.7 L10.5 4.8 L14.5 8.7"/></g></svg>
<div class="t" style="right:1032.45px;top:565.13px;font-size:14.02px;line-height:14.02px;color:#4b596d;font-weight:400;letter-spacing:0.55px;">254</div>
<div class="t" style="right:894.45px;top:565.13px;font-size:14.02px;line-height:14.02px;color:#4b596d;font-weight:400;letter-spacing:0.55px;">>1,000</div>
<div class="t" style="right:757.45px;top:565.13px;font-size:14.02px;line-height:14.02px;color:#4b596d;font-weight:400;letter-spacing:0.55px;">0</div>
<div class="t" style="right:619.45px;top:565.13px;font-size:14.02px;line-height:14.02px;color:#4b596d;font-weight:400;letter-spacing:0.55px;">0</div>
<div class="mt" style="left:1346.5px;top:560px;border:1px solid #d3dae4;color:#a3b0c2">A</div>
<div class="mt" style="left:1379.5px;top:560px;border:1px solid #d3dae4;color:#a3b0c2">S</div>
<div class="mt" style="left:1412.5px;top:560px;background:#d9dfe8;color:#1b2130;line-height:24px">O</div>
<div class="t" style="right:345.45px;top:565.13px;font-size:14.02px;line-height:14.02px;color:#4b596d;font-weight:400;letter-spacing:0.55px;">-</div>
<div class="t" style="right:207.95px;top:565.13px;font-size:14.02px;line-height:14.02px;color:#4b596d;font-weight:400;letter-spacing:0.55px;">-</div>
<div class="t" style="right:70.45px;top:565.13px;font-size:14.02px;line-height:14.02px;color:#4b596d;font-weight:400;letter-spacing:0.55px;">7</div>
<div class="r" style="left:41px;top:633px;width:1824px;height:1px;background:#dde3eb;"></div>
<div class="r" style="left:55px;top:604px;width:20px;height:20px;background:transparent;border:1.5px solid #52637e;border-radius:4px;box-sizing:border-box"></div>
<svg class="s" style="left:94px;top:600px;" width="24" height="24" viewBox="0 0 24 24"><g fill="none" stroke="#161b26" stroke-width="1.35" stroke-linecap="round" stroke-linejoin="round"><path d="M4.2 8.5H17.8"/><path d="M7.4 8.3 L8.9 5.6 H13.1 L14.6 8.3"/><path d="M5.6 8.8 V18.6 Q5.6 20.3 7.3 20.3 H14.9 Q16.6 20.3 16.6 18.6 V8.8"/><path d="M8.6 10.9V17.6 M11.1 10.9V17.6 M13.5 10.9V17.6"/></g></svg>
<div class="t kw" style="left:137px;top:605.69px;font-size:13.6px;line-height:13.6px;color:#232938;font-weight:700">sci fi tee shirts<span style="display:inline-block;position:relative;width:14px;height:10px;margin-left:8px"><svg style="position:absolute;left:-5.6px;top:-6.8px" width="24" height="24" viewBox="0 0 24 24"><g fill="none" stroke="#161b26" stroke-width="1.6" stroke-linecap="round" stroke-linejoin="round"><path d="M10.4 8.3 H7.2 Q5.4 8.3 5.4 10.1 V17.7 Q5.4 19.5 7.2 19.5 H15.1 Q16.9 19.5 16.9 17.7 V14.6"/><path d="M10.6 14.4 L18.2 6.8"/><path d="M13.6 6.8 H18.2 V11.6"/></g></svg></span><span style="display:inline-block;position:relative;width:20px;height:10px;margin-left:6px"><svg style="position:absolute;left:0.7px;top:-4px" width="20" height="20" viewBox="0 0 20 20"><circle cx="10" cy="10" r="10" fill="#dce2ea"/><text x="10.3" y="13.2" text-anchor="middle" font-family="Liberation Sans" font-weight="700" font-size="16.5" fill="#232a35">a</text><path d="M5 13.7 Q10.3 16.9 15.4 13.6" stroke="#ff9d12" stroke-width="1.4" fill="none" stroke-linecap="round"/></svg></span></div>
<div class="t" style="right:1444.45px;top:606.13px;font-size:14.02px;line-height:14.02px;color:#4b596d;font-weight:400;letter-spacing:0.55px;">22</div>
<div class="t" style="right:1335.45px;top:606.13px;font-size:14.02px;line-height:14.02px;color:#4b596d;font-weight:400;letter-spacing:0.55px;">215</div>
<svg class="s" style="left:589px;top:602px;" width="24" height="24" viewBox="0 0 24 24"><g fill="none" stroke="#3b4c69" stroke-width="1.35" stroke-linecap="round" stroke-linejoin="round"><path d="M4.6 4.4 V16.3 Q4.6 17.3 5.6 17.3 H19.4"/><path d="M7.8 12.3 L11 8.9 L14 11.8 L18.4 7.3"/></g></svg>
<div class="t" style="right:1185.95px;top:606.13px;font-size:14.02px;line-height:14.02px;color:#2b3342;font-weight:400;letter-spacing:0.55px;">3%</div>
<svg class="s" style="left:735px;top:602px;" width="21" height="24" viewBox="0 0 21 24"><g fill="none" stroke="#27c07d" stroke-width="1.35" stroke-linecap="round" stroke-linejoin="round"><path d="M10.5 4.8V17.8 M6.5 8.7 L10.5 4.8 L14.5 8.7"/></g></svg>
<div class="t" style="right:1032.45px;top:606.13px;font-size:14.02px;line-height:14.02px;color:#4b596d;font-weight:400;letter-spacing:0.55px;">226</div>
<div class="t" style="right:894.45px;top:606.13px;font-size:14.02px;line-height:14.02px;color:#4b596d;font-weight:400;letter-spacing:0.55px;">>10,000</div>
<div class="t" style="right:757.45px;top:606.13px;font-size:14.02px;line-height:14.02px;color:#4b596d;font-weight:400;letter-spacing:0.55px;">0</div>
<div class="t" style="right:619.45px;top:606.13px;font-size:14.02px;line-height:14.02px;color:#4b596d;font-weight:400;letter-spacing:0.55px;">0</div>
<div class="mt" style="left:1346.5px;top:601px;border:1px solid #d3dae4;color:#a3b0c2">A</div>
<div class="mt" style="left:1379.5px;top:601px;border:1px solid #d3dae4;color:#a3b0c2">S</div>
<div class="mt" style="left:1412.5px;top:601px;background:#d9dfe8;color:#1b2130;line-height:24px">O</div>
<div class="t" style="right:345.45px;top:606.13px;font-size:14.02px;line-height:14.02px;color:#4b596d;font-weight:400;letter-spacing:0.55px;">-</div>
<div class="t" style="right:207.95px;top:606.13px;font-size:14.02px;line-height:14.02px;color:#4b596d;font-weight:400;letter-spacing:0.55px;">-</div>
<div class="t" style="right:70.45px;top:606.13px;font-size:14.02px;line-height:14.02px;color:#4b596d;font-weight:400;letter-spacing:0.55px;">7</div>
<div class="r" style="left:41px;top:674px;width:1824px;height:1px;background:#dde3eb;"></div>
<div class="r" style="left:55px;top:645px;width:20px;height:20px;background:transparent;border:1.5px solid #52637e;border-radius:4px;box-sizing:border-box"></div>
<svg class="s" style="left:94px;top:641px;" width="24" height="24" viewBox="0 0 24 24"><g fill="none" stroke="#161b26" stroke-width="1.35" stroke-linecap="round" stroke-linejoin="round"><path d="M4.2 8.5H17.8"/><path d="M7.4 8.3 L8.9 5.6 H13.1 L14.6 8.3"/><path d="M5.6 8.8 V18.6 Q5.6 20.3 7.3 20.3 H14.9 Q16.6 20.3 16.6 18.6 V8.8"/><path d="M8.6 10.9V17.6 M11.1 10.9V17.6 M13.5 10.9V17.6"/></g></svg>
<div class="t kw" style="left:137px;top:646.69px;font-size:13.6px;line-height:13.6px;color:#232938;font-weight:700">i don&#x27;t believe<span style="display:inline-block;position:relative;width:14px;height:10px;margin-left:8px"><svg style="position:absolute;left:-5.6px;top:-6.8px" width="24" height="24" viewBox="0 0 24 24"><g fill="none" stroke="#161b26" stroke-width="1.6" stroke-linecap="round" stroke-linejoin="round"><path d="M10.4 8.3 H7.2 Q5.4 8.3 5.4 10.1 V17.7 Q5.4 19.5 7.2 19.5 H15.1 Q16.9 19.5 16.9 17.7 V14.6"/><path d="M10.6 14.4 L18.2 6.8"/><path d="M13.6 6.8 H18.2 V11.6"/></g></svg></span><span style="display:inline-block;position:relative;width:20px;height:10px;margin-left:6px"><svg style="position:absolute;left:0.7px;top:-4px" width="20" height="20" viewBox="0 0 20 20"><circle cx="10" cy="10" r="10" fill="#dce2ea"/><text x="10.3" y="13.2" text-anchor="middle" font-family="Liberation Sans" font-weight="700" font-size="16.5" fill="#232a35">a</text><path d="M5 13.7 Q10.3 16.9 15.4 13.6" stroke="#ff9d12" stroke-width="1.4" fill="none" stroke-linecap="round"/></svg></span></div>
<div class="t" style="right:1444.45px;top:647.13px;font-size:14.02px;line-height:14.02px;color:#4b596d;font-weight:400;letter-spacing:0.55px;">22</div>
<div class="t" style="right:1335.45px;top:647.13px;font-size:14.02px;line-height:14.02px;color:#4b596d;font-weight:400;letter-spacing:0.55px;">216</div>
<svg class="s" style="left:589px;top:643px;" width="24" height="24" viewBox="0 0 24 24"><g fill="none" stroke="#3b4c69" stroke-width="1.35" stroke-linecap="round" stroke-linejoin="round"><path d="M4.6 4.4 V16.3 Q4.6 17.3 5.6 17.3 H19.4"/><path d="M7.8 12.3 L11 8.9 L14 11.8 L18.4 7.3"/></g></svg>
<div class="t" style="right:1185.95px;top:647.13px;font-size:14.02px;line-height:14.02px;color:#2b3342;font-weight:400;letter-spacing:0.55px;">-9%</div>
<svg class="s" style="left:735px;top:643px;" width="21" height="24" viewBox="0 0 21 24"><g fill="none" stroke="#f0443a" stroke-width="1.35" stroke-linecap="round" stroke-linejoin="round"><path d="M10.5 4.2V17.2 M6.5 13.3 L10.5 17.2 L14.5 13.3"/></g></svg>
<div class="t" style="right:1032.45px;top:647.13px;font-size:14.02px;line-height:14.02px;color:#4b596d;font-weight:400;letter-spacing:0.55px;">7</div>
<div class="t" style="right:894.45px;top:647.13px;font-size:14.02px;line-height:14.02px;color:#4b596d;font-weight:400;letter-spacing:0.55px;">>10,000</div>
<div class="t" style="right:757.45px;top:647.13px;font-size:14.02px;line-height:14.02px;color:#4b596d;font-weight:400;letter-spacing:0.55px;">0</div>
<div class="t" style="right:619.45px;top:647.13px;font-size:14.02px;line-height:14.02px;color:#4b596d;font-weight:400;letter-spacing:0.55px;">0</div>
<div class="mt" style="left:1346.5px;top:642px;border:1px solid #d3dae4;color:#a3b0c2">A</div>
<div class="mt" style="left:1379.5px;top:642px;border:1px solid #d3dae4;color:#a3b0c2">S</div>
<div class="mt" style="left:1412.5px;top:642px;background:#d9dfe8;color:#1b2130;line-height:24px">O</div>
<div class="t" style="right:345.45px;top:647.13px;font-size:14.02px;line-height:14.02px;color:#4b596d;font-weight:400;letter-spacing:0.55px;">-</div>
<div class="t" style="right:207.95px;top:647.13px;font-size:14.02px;line-height:14.02px;color:#4b596d;font-weight:400;letter-spacing:0.55px;">-</div>
<div class="t" style="right:70.45px;top:647.13px;font-size:14.02px;line-height:14.02px;color:#4b596d;font-weight:400;letter-spacing:0.55px;">8</div>
<div class="r" style="left:41px;top:715px;width:1824px;height:1px;background:#dde3eb;"></div>
<div class="r" style="left:55px;top:686px;width:20px;height:20px;background:transparent;border:1.5px solid #52637e;border-radius:4px;box-sizing:border-box"></div>
<svg class="s" style="left:94px;top:682px;" width="24" height="24" viewBox="0 0 24 24"><g fill="none" stroke="#161b26" stroke-width="1.35" stroke-linecap="round" stroke-linejoin="round"><path d="M4.2 8.5H17.8"/><path d="M7.4 8.3 L8.9 5.6 H13.1 L14.6 8.3"/><path d="M5.6 8.8 V18.6 Q5.6 20.3 7.3 20.3 H14.9 Q16.6 20.3 16.6 18.6 V8.8"/><path d="M8.6 10.9V17.6 M11.1 10.9V17.6 M13.5 10.9V17.6"/></g></svg>
<div class="t kw" style="left:137px;top:687.69px;font-size:13.6px;line-height:13.6px;color:#232938;font-weight:700">sci fi t shirts for men<span style="display:inline-block;position:relative;width:14px;height:10px;margin-left:8px"><svg style="position:absolute;left:-5.6px;top:-6.8px" width="24" height="24" viewBox="0 0 24 24"><g fill="none" stroke="#161b26" stroke-width="1.6" stroke-linecap="round" stroke-linejoin="round"><path d="M10.4 8.3 H7.2 Q5.4 8.3 5.4 10.1 V17.7 Q5.4 19.5 7.2 19.5 H15.1 Q16.9 19.5 16.9 17.7 V14.6"/><path d="M10.6 14.4 L18.2 6.8"/><path d="M13.6 6.8 H18.2 V11.6"/></g></svg></span><span style="display:inline-block;position:relative;width:20px;height:10px;margin-left:6px"><svg style="position:absolute;left:0.7px;top:-4px" width="20" height="20" viewBox="0 0 20 20"><circle cx="10" cy="10" r="10" fill="#dce2ea"/><text x="10.3" y="13.2" text-anchor="middle" font-family="Liberation Sans" font-weight="700" font-size="16.5" fill="#232a35">a</text><path d="M5 13.7 Q10.3 16.9 15.4 13.6" stroke="#ff9d12" stroke-width="1.4" fill="none" stroke-linecap="round"/></svg></span></div>
<div class="t" style="right:1444.45px;top:688.13px;font-size:14.02px;line-height:14.02px;color:#4b596d;font-weight:400;letter-spacing:0.55px;">150</div>
<div class="t" style="right:1335.45px;top:688.13px;font-size:14.02px;line-height:14.02px;color:#4b596d;font-weight:400;letter-spacing:0.55px;">150</div>
<svg class="s" style="left:589px;top:684px;" width="24" height="24" viewBox="0 0 24 24"><g fill="none" stroke="#3b4c69" stroke-width="1.35" stroke-linecap="round" stroke-linejoin="round"><path d="M4.6 4.4 V16.3 Q4.6 17.3 5.6 17.3 H19.4"/><path d="M7.8 12.3 L11 8.9 L14 11.8 L18.4 7.3"/></g></svg>
<div class="t" style="right:1185.95px;top:688.13px;font-size:14.02px;line-height:14.02px;color:#2b3342;font-weight:400;letter-spacing:0.55px;">-31%</div>
<svg class="s" style="left:735px;top:684px;" width="21" height="24" viewBox="0 0 21 24"><g fill="none" stroke="#f0443a" stroke-width="1.35" stroke-linecap="round" stroke-linejoin="round"><path d="M10.5 4.2V17.2 M6.5 13.3 L10.5 17.2 L14.5 13.3"/></g></svg>
<div class="t" style="right:1032.45px;top:688.13px;font-size:14.02px;line-height:14.02px;color:#4b596d;font-weight:400;letter-spacing:0.55px;">189</div>
<div class="t" style="right:894.45px;top:688.13px;font-size:14.02px;line-height:14.02px;color:#4b596d;font-weight:400;letter-spacing:0.55px;">>1,000</div>
<div class="t" style="right:757.45px;top:688.13px;font-size:14.02px;line-height:14.02px;color:#4b596d;font-weight:400;letter-spacing:0.55px;">0</div>
<div class="t" style="right:619.45px;top:688.13px;font-size:14.02px;line-height:14.02px;color:#4b596d;font-weight:400;letter-spacing:0.55px;">0</div>
<div class="mt" style="left:1346.5px;top:683px;border:1px solid #d3dae4;color:#a3b0c2">A</div>
<div class="mt" style="left:1379.5px;top:683px;border:1px solid #d3dae4;color:#a3b0c2">S</div>
<div class="mt" style="left:1412.5px;top:683px;background:#d9dfe8;color:#1b2130;line-height:24px">O</div>
<div class="t" style="right:345.45px;top:688.13px;font-size:14.02px;line-height:14.02px;color:#4b596d;font-weight:400;letter-spacing:0.55px;">-</div>
<div class="t" style="right:207.95px;top:688.13px;font-size:14.02px;line-height:14.02px;color:#4b596d;font-weight:400;letter-spacing:0.55px;">-</div>
<div class="t" style="right:70.45px;top:688.13px;font-size:14.02px;line-height:14.02px;color:#4b596d;font-weight:400;letter-spacing:0.55px;">11</div>
<div class="r" style="left:41px;top:756px;width:1824px;height:1px;background:#dde3eb;"></div>
<div class="r" style="left:55px;top:727px;width:20px;height:20px;background:transparent;border:1.5px solid #52637e;border-radius:4px;box-sizing:border-box"></div>
<svg class="s" style="left:94px;top:723px;" width="24" height="24" viewBox="0 0 24 24"><g fill="none" stroke="#161b26" stroke-width="1.35" stroke-linecap="round" stroke-linejoin="round"><path d="M4.2 8.5H17.8"/><path d="M7.4 8.3 L8.9 5.6 H13.1 L14.6 8.3"/><path d="M5.6 8.8 V18.6 Q5.6 20.3 7.3 20.3 H14.9 Q16.6 20.3 16.6 18.6 V8.8"/><path d="M8.6 10.9V17.6 M11.1 10.9V17.6 M13.5 10.9V17.6"/></g></svg>
<div class="t kw" style="left:137px;top:728.69px;font-size:13.6px;line-height:13.6px;color:#232938;font-weight:700">alien i believe<span style="display:inline-block;position:relative;width:14px;height:10px;margin-left:8px"><svg style="position:absolute;left:-5.6px;top:-6.8px" width="24" height="24" viewBox="0 0 24 24"><g fill="none" stroke="#161b26" stroke-width="1.6" stroke-linecap="round" stroke-linejoin="round"><path d="M10.4 8.3 H7.2 Q5.4 8.3 5.4 10.1 V17.7 Q5.4 19.5 7.2 19.5 H15.1 Q16.9 19.5 16.9 17.7 V14.6"/><path d="M10.6 14.4 L18.2 6.8"/><path d="M13.6 6.8 H18.2 V11.6"/></g></svg></span><span style="display:inline-block;position:relative;width:20px;height:10px;margin-left:6px"><svg style="position:absolute;left:0.7px;top:-4px" width="20" height="20" viewBox="0 0 20 20"><circle cx="10" cy="10" r="10" fill="#dce2ea"/><text x="10.3" y="13.2" text-anchor="middle" font-family="Liberation Sans" font-weight="700" font-size="16.5" fill="#232a35">a</text><path d="M5 13.7 Q10.3 16.9 15.4 13.6" stroke="#ff9d12" stroke-width="1.4" fill="none" stroke-linecap="round"/></svg></span></div>
<div class="t" style="right:1444.45px;top:729.13px;font-size:14.02px;line-height:14.02px;color:#4b596d;font-weight:400;letter-spacing:0.55px;">512</div>
<div class="t" style="right:1335.45px;top:729.13px;font-size:14.02px;line-height:14.02px;color:#4b596d;font-weight:400;letter-spacing:0.55px;">512</div>
<svg class="s" style="left:589px;top:725px;" width="24" height="24" viewBox="0 0 24 24"><g fill="none" stroke="#3b4c69" stroke-width="1.35" stroke-linecap="round" stroke-linejoin="round"><path d="M4.6 4.4 V16.3 Q4.6 17.3 5.6 17.3 H19.4"/><path d="M7.8 12.3 L11 8.9 L14 11.8 L18.4 7.3"/></g></svg>
<div class="t" style="right:1185.95px;top:729.13px;font-size:14.02px;line-height:14.02px;color:#2b3342;font-weight:400;letter-spacing:0.55px;">41%</div>
<svg class="s" style="left:735px;top:725px;" width="21" height="24" viewBox="0 0 21 24"><g fill="none" stroke="#27c07d" stroke-width="1.35" stroke-linecap="round" stroke-linejoin="round"><path d="M10.5 4.8V17.8 M6.5 8.7 L10.5 4.8 L14.5 8.7"/></g></svg>
<div class="t" style="right:1032.45px;top:729.13px;font-size:14.02px;line-height:14.02px;color:#4b596d;font-weight:400;letter-spacing:0.55px;">504</div>
<div class="t" style="right:894.45px;top:729.13px;font-size:14.02px;line-height:14.02px;color:#4b596d;font-weight:400;letter-spacing:0.55px;">>1,000</div>
<div class="t" style="right:757.45px;top:729.13px;font-size:14.02px;line-height:14.02px;color:#4b596d;font-weight:400;letter-spacing:0.55px;">0</div>
<div class="t" style="right:619.45px;top:729.13px;font-size:14.02px;line-height:14.02px;color:#4b596d;font-weight:400;letter-spacing:0.55px;">0</div>
<div class="mt" style="left:1346.5px;top:724px;border:1px solid #d3dae4;color:#a3b0c2">A</div>
<div class="mt" style="left:1379.5px;top:724px;border:1px solid #d3dae4;color:#a3b0c2">S</div>
<div class="mt" style="left:1412.5px;top:724px;background:#d9dfe8;color:#1b2130;line-height:24px">O</div>
<div class="t" style="right:345.45px;top:729.13px;font-size:14.02px;line-height:14.02px;color:#4b596d;font-weight:400;letter-spacing:0.55px;">-</div>
<div class="t" style="right:207.95px;top:729.13px;font-size:14.02px;line-height:14.02px;color:#4b596d;font-weight:400;letter-spacing:0.55px;">-</div>
<div class="t" style="right:70.45px;top:729.13px;font-size:14.02px;line-height:14.02px;color:#4b596d;font-weight:400;letter-spacing:0.55px;">11</div>
<div class="r" style="left:41px;top:797px;width:1824px;height:1px;background:#dde3eb;"></div>
<div class="r" style="left:55px;top:768px;width:20px;height:20px;background:transparent;border:1.5px solid #52637e;border-radius:4px;box-sizing:border-box"></div>
<svg class="s" style="left:94px;top:764px;" width="24" height="24" viewBox="0 0 24 24"><g fill="none" stroke="#161b26" stroke-width="1.35" stroke-linecap="round" stroke-linejoin="round"><path d="M4.2 8.5H17.8"/><path d="M7.4 8.3 L8.9 5.6 H13.1 L14.6 8.3"/><path d="M5.6 8.8 V18.6 Q5.6 20.3 7.3 20.3 H14.9 Q16.6 20.3 16.6 18.6 V8.8"/><path d="M8.6 10.9V17.6 M11.1 10.9V17.6 M13.5 10.9V17.6"/></g></svg>
<div class="t kw" style="left:137px;top:769.69px;font-size:13.6px;line-height:13.6px;color:#232938;font-weight:700">alien believe t shirt<span style="display:inline-block;position:relative;width:14px;height:10px;margin-left:8px"><svg style="position:absolute;left:-5.6px;top:-6.8px" width="24" height="24" viewBox="0 0 24 24"><g fill="none" stroke="#161b26" stroke-width="1.6" stroke-linecap="round" stroke-linejoin="round"><path d="M10.4 8.3 H7.2 Q5.4 8.3 5.4 10.1 V17.7 Q5.4 19.5 7.2 19.5 H15.1 Q16.9 19.5 16.9 17.7 V14.6"/><path d="M10.6 14.4 L18.2 6.8"/><path d="M13.6 6.8 H18.2 V11.6"/></g></svg></span><span style="display:inline-block;position:relative;width:20px;height:10px;margin-left:6px"><svg style="position:absolute;left:0.7px;top:-4px" width="20" height="20" viewBox="0 0 20 20"><circle cx="10" cy="10" r="10" fill="#dce2ea"/><text x="10.3" y="13.2" text-anchor="middle" font-family="Liberation Sans" font-weight="700" font-size="16.5" fill="#232a35">a</text><path d="M5 13.7 Q10.3 16.9 15.4 13.6" stroke="#ff9d12" stroke-width="1.4" fill="none" stroke-linecap="round"/></svg></span></div>
<div class="t" style="right:1444.45px;top:770.13px;font-size:14.02px;line-height:14.02px;color:#4b596d;font-weight:400;letter-spacing:0.55px;">35</div>
<div class="t" style="right:1335.45px;top:770.13px;font-size:14.02px;line-height:14.02px;color:#4b596d;font-weight:400;letter-spacing:0.55px;">350</div>
<svg class="s" style="left:589px;top:766px;" width="24" height="24" viewBox="0 0 24 24"><g fill="none" stroke="#3b4c69" stroke-width="1.35" stroke-linecap="round" stroke-linejoin="round"><path d="M4.6 4.4 V16.3 Q4.6 17.3 5.6 17.3 H19.4"/><path d="M7.8 12.3 L11 8.9 L14 11.8 L18.4 7.3"/></g></svg>
<div class="t" style="right:1185.95px;top:770.13px;font-size:14.02px;line-height:14.02px;color:#2b3342;font-weight:400;letter-spacing:0.55px;">7%</div>
<svg class="s" style="left:735px;top:766px;" width="21" height="24" viewBox="0 0 21 24"><g fill="none" stroke="#27c07d" stroke-width="1.35" stroke-linecap="round" stroke-linejoin="round"><path d="M10.5 4.8V17.8 M6.5 8.7 L10.5 4.8 L14.5 8.7"/></g></svg>
<div class="t" style="right:1032.45px;top:770.13px;font-size:14.02px;line-height:14.02px;color:#4b596d;font-weight:400;letter-spacing:0.55px;">252</div>
<div class="t" style="right:894.45px;top:770.13px;font-size:14.02px;line-height:14.02px;color:#4b596d;font-weight:400;letter-spacing:0.55px;">>10,000</div>
<div class="t" style="right:757.45px;top:770.13px;font-size:14.02px;line-height:14.02px;color:#4b596d;font-weight:400;letter-spacing:0.55px;">0</div>
<div class="t" style="right:619.45px;top:770.13px;font-size:14.02px;line-height:14.02px;color:#4b596d;font-weight:400;letter-spacing:0.55px;">0</div>
<div class="mt" style="left:1346.5px;top:765px;border:1px solid #d3dae4;color:#a3b0c2">A</div>
<div class="mt" style="left:1379.5px;top:765px;border:1px solid #d3dae4;color:#a3b0c2">S</div>
<div class="mt" style="left:1412.5px;top:765px;background:#d9dfe8;color:#1b2130;line-height:24px">O</div>
<div class="t" style="right:345.45px;top:770.13px;font-size:14.02px;line-height:14.02px;color:#4b596d;font-weight:400;letter-spacing:0.55px;">-</div>
<div class="t" style="right:207.95px;top:770.13px;font-size:14.02px;line-height:14.02px;color:#4b596d;font-weight:400;letter-spacing:0.55px;">-</div>
<div class="t" style="right:70.45px;top:770.13px;font-size:14.02px;line-height:14.02px;color:#4b596d;font-weight:400;letter-spacing:0.55px;">11</div>
<div class="r" style="left:41px;top:838px;width:1824px;height:1px;background:#dde3eb;"></div>
<div class="r" style="left:55px;top:809px;width:20px;height:20px;background:transparent;border:1.5px solid #52637e;border-radius:4px;box-sizing:border-box"></div>
<svg class="s" style="left:94px;top:805px;" width="24" height="24" viewBox="0 0 24 24"><g fill="none" stroke="#161b26" stroke-width="1.35" stroke-linecap="round" stroke-linejoin="round"><path d="M4.2 8.5H17.8"/><path d="M7.4 8.3 L8.9 5.6 H13.1 L14.6 8.3"/><path d="M5.6 8.8 V18.6 Q5.6 20.3 7.3 20.3 H14.9 Q16.6 20.3 16.6 18.6 V8.8"/><path d="M8.6 10.9V17.6 M11.1 10.9V17.6 M13.5 10.9V17.6"/></g></svg>
<div class="t kw" style="left:137px;top:810.69px;font-size:13.6px;line-height:13.6px;color:#232938;font-weight:700">scifi shirts<span style="display:inline-block;position:relative;width:14px;height:10px;margin-left:8px"><svg style="position:absolute;left:-5.6px;top:-6.8px" width="24" height="24" viewBox="0 0 24 24"><g fill="none" stroke="#161b26" stroke-width="1.6" stroke-linecap="round" stroke-linejoin="round"><path d="M10.4 8.3 H7.2 Q5.4 8.3 5.4 10.1 V17.7 Q5.4 19.5 7.2 19.5 H15.1 Q16.9 19.5 16.9 17.7 V14.6"/><path d="M10.6 14.4 L18.2 6.8"/><path d="M13.6 6.8 H18.2 V11.6"/></g></svg></span><span style="display:inline-block;position:relative;width:20px;height:10px;margin-left:6px"><svg style="position:absolute;left:0.7px;top:-4px" width="20" height="20" viewBox="0 0 20 20"><circle cx="10" cy="10" r="10" fill="#dce2ea"/><text x="10.3" y="13.2" text-anchor="middle" font-family="Liberation Sans" font-weight="700" font-size="16.5" fill="#232a35">a</text><path d="M5 13.7 Q10.3 16.9 15.4 13.6" stroke="#ff9d12" stroke-width="1.4" fill="none" stroke-linecap="round"/></svg></span></div>
<div class="t" style="right:1444.45px;top:811.13px;font-size:14.02px;line-height:14.02px;color:#4b596d;font-weight:400;letter-spacing:0.55px;">171</div>
<div class="t" style="right:1335.45px;top:811.13px;font-size:14.02px;line-height:14.02px;color:#4b596d;font-weight:400;letter-spacing:0.55px;">171</div>
<svg class="s" style="left:589px;top:807px;" width="24" height="24" viewBox="0 0 24 24"><g fill="none" stroke="#3b4c69" stroke-width="1.35" stroke-linecap="round" stroke-linejoin="round"><path d="M4.6 4.4 V16.3 Q4.6 17.3 5.6 17.3 H19.4"/><path d="M7.8 12.3 L11 8.9 L14 11.8 L18.4 7.3"/></g></svg>
<div class="t" style="right:1185.95px;top:811.13px;font-size:14.02px;line-height:14.02px;color:#2b3342;font-weight:400;letter-spacing:0.55px;">-6%</div>
<svg class="s" style="left:735px;top:807px;" width="21" height="24" viewBox="0 0 21 24"><g fill="none" stroke="#f0443a" stroke-width="1.35" stroke-linecap="round" stroke-linejoin="round"><path d="M10.5 4.2V17.2 M6.5 13.3 L10.5 17.2 L14.5 13.3"/></g></svg>
<div class="t" style="right:1032.45px;top:811.13px;font-size:14.02px;line-height:14.02px;color:#4b596d;font-weight:400;letter-spacing:0.55px;">251</div>
<div class="t" style="right:894.45px;top:811.13px;font-size:14.02px;line-height:14.02px;color:#4b596d;font-weight:400;letter-spacing:0.55px;">>1,000</div>
<div class="t" style="right:757.45px;top:811.13px;font-size:14.02px;line-height:14.02px;color:#4b596d;font-weight:400;letter-spacing:0.55px;">0</div>
<div class="t" style="right:619.45px;top:811.13px;font-size:14.02px;line-height:14.02px;color:#4b596d;font-weight:400;letter-spacing:0.55px;">0</div>
<div class="mt" style="left:1346.5px;top:806px;border:1px solid #d3dae4;color:#a3b0c2">A</div>
<div class="mt" style="left:1379.5px;top:806px;border:1px solid #d3dae4;color:#a3b0c2">S</div>
<div class="mt" style="left:1412.5px;top:806px;background:#d9dfe8;color:#1b2130;line-height:24px">O</div>
<div class="t" style="right:345.45px;top:811.13px;font-size:14.02px;line-height:14.02px;color:#4b596d;font-weight:400;letter-spacing:0.55px;">-</div>
<div class="t" style="right:207.95px;top:811.13px;font-size:14.02px;line-height:14.02px;color:#4b596d;font-weight:400;letter-spacing:0.55px;">-</div>
<div class="t" style="right:70.45px;top:811.13px;font-size:14.02px;line-height:14.02px;color:#4b596d;font-weight:400;letter-spacing:0.55px;">13</div>
<div class="r" style="left:41px;top:879px;width:1824px;height:1px;background:#dde3eb;"></div>
<div class="r" style="left:55px;top:850px;width:20px;height:20px;background:transparent;border:1.5px solid #52637e;border-radius:4px;box-sizing:border-box"></div>
<svg class="s" style="left:94px;top:846px;" width="24" height="24" viewBox="0 0 24 24"><g fill="none" stroke="#161b26" stroke-width="1.35" stroke-linecap="round" stroke-linejoin="round"><path d="M4.2 8.5H17.8"/><path d="M7.4 8.3 L8.9 5.6 H13.1 L14.6 8.3"/><path d="M5.6 8.8 V18.6 Q5.6 20.3 7.3 20.3 H14.9 Q16.6 20.3 16.6 18.6 V8.8"/><path d="M8.6 10.9V17.6 M11.1 10.9V17.6 M13.5 10.9V17.6"/></g></svg>
<div class="t kw" style="left:137px;top:851.69px;font-size:13.6px;line-height:13.6px;color:#232938;font-weight:700">believe tee<span style="display:inline-block;position:relative;width:14px;height:10px;margin-left:8px"><svg style="position:absolute;left:-5.6px;top:-6.8px" width="24" height="24" viewBox="0 0 24 24"><g fill="none" stroke="#161b26" stroke-width="1.6" stroke-linecap="round" stroke-linejoin="round"><path d="M10.4 8.3 H7.2 Q5.4 8.3 5.4 10.1 V17.7 Q5.4 19.5 7.2 19.5 H15.1 Q16.9 19.5 16.9 17.7 V14.6"/><path d="M10.6 14.4 L18.2 6.8"/><path d="M13.6 6.8 H18.2 V11.6"/></g></svg></span><span style="display:inline-block;position:relative;width:20px;height:10px;margin-left:6px"><svg style="position:absolute;left:0.7px;top:-4px" width="20" height="20" viewBox="0 0 20 20"><circle cx="10" cy="10" r="10" fill="#dce2ea"/><text x="10.3" y="13.2" text-anchor="middle" font-family="Liberation Sans" font-weight="700" font-size="16.5" fill="#232a35">a</text><path d="M5 13.7 Q10.3 16.9 15.4 13.6" stroke="#ff9d12" stroke-width="1.4" fill="none" stroke-linecap="round"/></svg></span></div>
<div class="t" style="right:1444.45px;top:852.13px;font-size:14.02px;line-height:14.02px;color:#4b596d;font-weight:400;letter-spacing:0.55px;">19</div>
<div class="t" style="right:1335.45px;top:852.13px;font-size:14.02px;line-height:14.02px;color:#4b596d;font-weight:400;letter-spacing:0.55px;">187</div>
<svg class="s" style="left:589px;top:848px;" width="24" height="24" viewBox="0 0 24 24"><g fill="none" stroke="#3b4c69" stroke-width="1.35" stroke-linecap="round" stroke-linejoin="round"><path d="M4.6 4.4 V16.3 Q4.6 17.3 5.6 17.3 H19.4"/><path d="M7.8 12.3 L11 8.9 L14 11.8 L18.4 7.3"/></g></svg>
<div class="t" style="right:1185.95px;top:852.13px;font-size:14.02px;line-height:14.02px;color:#2b3342;font-weight:400;letter-spacing:0.55px;">39%</div>
<svg class="s" style="left:735px;top:848px;" width="21" height="24" viewBox="0 0 21 24"><g fill="none" stroke="#27c07d" stroke-width="1.35" stroke-linecap="round" stroke-linejoin="round"><path d="M10.5 4.8V17.8 M6.5 8.7 L10.5 4.8 L14.5 8.7"/></g></svg>
<div class="t" style="right:1032.45px;top:852.13px;font-size:14.02px;line-height:14.02px;color:#4b596d;font-weight:400;letter-spacing:0.55px;">65</div>
<div class="t" style="right:894.45px;top:852.13px;font-size:14.02px;line-height:14.02px;color:#4b596d;font-weight:400;letter-spacing:0.55px;">>10,000</div>
<div class="t" style="right:757.45px;top:852.13px;font-size:14.02px;line-height:14.02px;color:#4b596d;font-weight:400;letter-spacing:0.55px;">8</div>
<div class="t" style="right:619.45px;top:852.13px;font-size:14.02px;line-height:14.02px;color:#4b596d;font-weight:400;letter-spacing:0.55px;">1</div>
<div class="mt" style="left:1346.5px;top:847px;border:1px solid #d3dae4;color:#a3b0c2">A</div>
<div class="mt" style="left:1379.5px;top:847px;border:1px solid #d3dae4;color:#a3b0c2">S</div>
<div class="mt" style="left:1412.5px;top:847px;background:#d9dfe8;color:#1b2130;line-height:24px">O</div>
<div class="t" style="right:345.45px;top:852.13px;font-size:14.02px;line-height:14.02px;color:#4b596d;font-weight:400;letter-spacing:0.55px;">-</div>
<div class="t" style="right:207.95px;top:852.13px;font-size:14.02px;line-height:14.02px;color:#4b596d;font-weight:400;letter-spacing:0.55px;">-</div>
<div class="t" style="right:70.45px;top:852.13px;font-size:14.02px;line-height:14.02px;color:#4b596d;font-weight:400;letter-spacing:0.55px;">16</div>
<div class="r" style="left:41px;top:920px;width:1824px;height:1px;background:#dde3eb;"></div>
<div class="r" style="left:55px;top:891px;width:20px;height:20px;background:transparent;border:1.5px solid #52637e;border-radius:4px;box-sizing:border-box"></div>
<svg class="s" style="left:94px;top:887px;" width="24" height="24" viewBox="0 0 24 24"><g fill="none" stroke="#161b26" stroke-width="1.35" stroke-linecap="round" stroke-linejoin="round"><path d="M4.2 8.5H17.8"/><path d="M7.4 8.3 L8.9 5.6 H13.1 L14.6 8.3"/><path d="M5.6 8.8 V18.6 Q5.6 20.3 7.3 20.3 H14.9 Q16.6 20.3 16.6 18.6 V8.8"/><path d="M8.6 10.9V17.6 M11.1 10.9V17.6 M13.5 10.9V17.6"/></g></svg>
<div class="t kw" style="left:137px;top:892.69px;font-size:13.6px;line-height:13.6px;color:#232938;font-weight:700"><span style="display:inline-block;width:149px">being human t shirt f...</span><span style="display:inline-block;position:relative;width:14px;height:10px;margin-left:8px"><svg style="position:absolute;left:-5.6px;top:-6.8px" width="24" height="24" viewBox="0 0 24 24"><g fill="none" stroke="#161b26" stroke-width="1.6" stroke-linecap="round" stroke-linejoin="round"><path d="M10.4 8.3 H7.2 Q5.4 8.3 5.4 10.1 V17.7 Q5.4 19.5 7.2 19.5 H15.1 Q16.9 19.5 16.9 17.7 V14.6"/><path d="M10.6 14.4 L18.2 6.8"/><path d="M13.6 6.8 H18.2 V11.6"/></g></svg></span><span style="display:inline-block;position:relative;width:20px;height:10px;margin-left:6px"><svg style="position:absolute;left:0.7px;top:-4px" width="20" height="20" viewBox="0 0 20 20"><circle cx="10" cy="10" r="10" fill="#dce2ea"/><text x="10.3" y="13.2" text-anchor="middle" font-family="Liberation Sans" font-weight="700" font-size="16.5" fill="#232a35">a</text><path d="M5 13.7 Q10.3 16.9 15.4 13.6" stroke="#ff9d12" stroke-width="1.4" fill="none" stroke-linecap="round"/></svg></span></div>
<div class="t" style="right:1444.45px;top:893.13px;font-size:14.02px;line-height:14.02px;color:#4b596d;font-weight:400;letter-spacing:0.55px;">2,852</div>
<div class="t" style="right:1335.45px;top:893.13px;font-size:14.02px;line-height:14.02px;color:#4b596d;font-weight:400;letter-spacing:0.55px;">231</div>
<svg class="s" style="left:589px;top:889px;" width="24" height="24" viewBox="0 0 24 24"><g fill="none" stroke="#3b4c69" stroke-width="1.35" stroke-linecap="round" stroke-linejoin="round"><path d="M4.6 4.4 V16.3 Q4.6 17.3 5.6 17.3 H19.4"/><path d="M7.8 12.3 L11 8.9 L14 11.8 L18.4 7.3"/></g></svg>
<div class="t" style="right:1185.95px;top:893.13px;font-size:14.02px;line-height:14.02px;color:#2b3342;font-weight:400;letter-spacing:0.55px;">36%</div>
<svg class="s" style="left:735px;top:889px;" width="21" height="24" viewBox="0 0 21 24"><g fill="none" stroke="#27c07d" stroke-width="1.35" stroke-linecap="round" stroke-linejoin="round"><path d="M10.5 4.8V17.8 M6.5 8.7 L10.5 4.8 L14.5 8.7"/></g></svg>
<div class="t" style="right:1032.45px;top:893.13px;font-size:14.02px;line-height:14.02px;color:#4b596d;font-weight:400;letter-spacing:0.55px;">86</div>
<div class="t" style="right:894.45px;top:893.13px;font-size:14.02px;line-height:14.02px;color:#4b596d;font-weight:400;letter-spacing:0.55px;">81</div>
<div class="t" style="right:757.45px;top:893.13px;font-size:14.02px;line-height:14.02px;color:#4b596d;font-weight:400;letter-spacing:0.55px;">0</div>
<div class="t" style="right:619.45px;top:893.13px;font-size:14.02px;line-height:14.02px;color:#4b596d;font-weight:400;letter-spacing:0.55px;">0</div>
<div class="mt" style="left:1346.5px;top:888px;border:1px solid #d3dae4;color:#a3b0c2">A</div>
<div class="mt" style="left:1379.5px;top:888px;border:1px solid #d3dae4;color:#a3b0c2">S</div>
<div class="mt" style="left:1412.5px;top:888px;background:#d9dfe8;color:#1b2130;line-height:24px">O</div>
<div class="t" style="right:345.45px;top:893.13px;font-size:14.02px;line-height:14.02px;color:#4b596d;font-weight:400;letter-spacing:0.55px;">-</div>
<div class="t" style="right:207.95px;top:893.13px;font-size:14.02px;line-height:14.02px;color:#4b596d;font-weight:400;letter-spacing:0.55px;">-</div>
<div class="t" style="right:70.45px;top:893.13px;font-size:14.02px;line-height:14.02px;color:#4b596d;font-weight:400;letter-spacing:0.55px;">17</div>
<div class="r" style="left:41px;top:961px;width:1824px;height:1px;background:#dde3eb;"></div>
<div class="r" style="left:55px;top:932px;width:20px;height:20px;background:transparent;border:1.5px solid #52637e;border-radius:4px;box-sizing:border-box"></div>
<svg class="s" style="left:94px;top:928px;" width="24" height="24" viewBox="0 0 24 24"><g fill="none" stroke="#161b26" stroke-width="1.35" stroke-linecap="round" stroke-linejoin="round"><path d="M4.2 8.5H17.8"/><path d="M7.4 8.3 L8.9 5.6 H13.1 L14.6 8.3"/><path d="M5.6 8.8 V18.6 Q5.6 20.3 7.3 20.3 H14.9 Q16.6 20.3 16.6 18.6 V8.8"/><path d="M8.6 10.9V17.6 M11.1 10.9V17.6 M13.5 10.9V17.6"/></g></svg>
<div class="t kw" style="left:137px;top:933.69px;font-size:13.6px;line-height:13.6px;color:#232938;font-weight:700">alien believe shirt<span style="display:inline-block;position:relative;width:14px;height:10px;margin-left:8px"><svg style="position:absolute;left:-5.6px;top:-6.8px" width="24" height="24" viewBox="0 0 24 24"><g fill="none" stroke="#161b26" stroke-width="1.6" stroke-linecap="round" stroke-linejoin="round"><path d="M10.4 8.3 H7.2 Q5.4 8.3 5.4 10.1 V17.7 Q5.4 19.5 7.2 19.5 H15.1 Q16.9 19.5 16.9 17.7 V14.6"/><path d="M10.6 14.4 L18.2 6.8"/><path d="M13.6 6.8 H18.2 V11.6"/></g></svg></span><span style="display:inline-block;position:relative;width:20px;height:10px;margin-left:6px"><svg style="position:absolute;left:0.7px;top:-4px" width="20" height="20" viewBox="0 0 20 20"><circle cx="10" cy="10" r="10" fill="#dce2ea"/><text x="10.3" y="13.2" text-anchor="middle" font-family="Liberation Sans" font-weight="700" font-size="16.5" fill="#232a35">a</text><path d="M5 13.7 Q10.3 16.9 15.4 13.6" stroke="#ff9d12" stroke-width="1.4" fill="none" stroke-linecap="round"/></svg></span></div>
<div class="t" style="right:1444.45px;top:934.13px;font-size:14.02px;line-height:14.02px;color:#4b596d;font-weight:400;letter-spacing:0.55px;">414</div>
<div class="t" style="right:1335.45px;top:934.13px;font-size:14.02px;line-height:14.02px;color:#4b596d;font-weight:400;letter-spacing:0.55px;">312</div>
<svg class="s" style="left:589px;top:930px;" width="24" height="24" viewBox="0 0 24 24"><g fill="none" stroke="#3b4c69" stroke-width="1.35" stroke-linecap="round" stroke-linejoin="round"><path d="M4.6 4.4 V16.3 Q4.6 17.3 5.6 17.3 H19.4"/><path d="M7.8 12.3 L11 8.9 L14 11.8 L18.4 7.3"/></g></svg>
<div class="t" style="right:1185.95px;top:934.13px;font-size:14.02px;line-height:14.02px;color:#2b3342;font-weight:400;letter-spacing:0.55px;">-1%</div>
<svg class="s" style="left:735px;top:930px;" width="21" height="24" viewBox="0 0 21 24"><g fill="none" stroke="#f0443a" stroke-width="1.35" stroke-linecap="round" stroke-linejoin="round"><path d="M10.5 4.2V17.2 M6.5 13.3 L10.5 17.2 L14.5 13.3"/></g></svg>
<div class="t" style="right:1032.45px;top:934.13px;font-size:14.02px;line-height:14.02px;color:#4b596d;font-weight:400;letter-spacing:0.55px;">342</div>
<div class="t" style="right:894.45px;top:934.13px;font-size:14.02px;line-height:14.02px;color:#4b596d;font-weight:400;letter-spacing:0.55px;">>754</div>
<div class="t" style="right:757.45px;top:934.13px;font-size:14.02px;line-height:14.02px;color:#4b596d;font-weight:400;letter-spacing:0.55px;">0</div>
<div class="t" style="right:619.45px;top:934.13px;font-size:14.02px;line-height:14.02px;color:#4b596d;font-weight:400;letter-spacing:0.55px;">0</div>
<div class="mt" style="left:1346.5px;top:929px;border:1px solid #d3dae4;color:#a3b0c2">A</div>
<div class="mt" style="left:1379.5px;top:929px;border:1px solid #d3dae4;color:#a3b0c2">S</div>
<div class="mt" style="left:1412.5px;top:929px;background:#d9dfe8;color:#1b2130;line-height:24px">O</div>
<div class="t" style="right:345.45px;top:934.13px;font-size:14.02px;line-height:14.02px;color:#4b596d;font-weight:400;letter-spacing:0.55px;">-</div>
<div class="t" style="right:207.95px;top:934.13px;font-size:14.02px;line-height:14.02px;color:#4b596d;font-weight:400;letter-spacing:0.55px;">-</div>
<div class="t" style="right:70.45px;top:934.13px;font-size:14.02px;line-height:14.02px;color:#4b596d;font-weight:400;letter-spacing:0.55px;">17</div>
<div class="r" style="left:41px;top:1002px;width:1824px;height:1px;background:#dde3eb;"></div>
<div class="r" style="left:55px;top:973px;width:20px;height:20px;background:transparent;border:1.5px solid #52637e;border-radius:4px;box-sizing:border-box"></div>
<svg class="s" style="left:94px;top:969px;" width="24" height="24" viewBox="0 0 24 24"><g fill="none" stroke="#161b26" stroke-width="1.35" stroke-linecap="round" stroke-linejoin="round"><path d="M4.2 8.5H17.8"/><path d="M7.4 8.3 L8.9 5.6 H13.1 L14.6 8.3"/><path d="M5.6 8.8 V18.6 Q5.6 20.3 7.3 20.3 H14.9 Q16.6 20.3 16.6 18.6 V8.8"/><path d="M8.6 10.9V17.6 M11.1 10.9V17.6 M13.5 10.9V17.6"/></g></svg>
<div class="t kw" style="left:137px;top:974.69px;font-size:13.6px;line-height:13.6px;color:#232938;font-weight:700">believe shirt<span style="display:inline-block;position:relative;width:14px;height:10px;margin-left:8px"><svg style="position:absolute;left:-5.6px;top:-6.8px" width="24" height="24" viewBox="0 0 24 24"><g fill="none" stroke="#161b26" stroke-width="1.6" stroke-linecap="round" stroke-linejoin="round"><path d="M10.4 8.3 H7.2 Q5.4 8.3 5.4 10.1 V17.7 Q5.4 19.5 7.2 19.5 H15.1 Q16.9 19.5 16.9 17.7 V14.6"/><path d="M10.6 14.4 L18.2 6.8"/><path d="M13.6 6.8 H18.2 V11.6"/></g></svg></span><span style="display:inline-block;position:relative;width:20px;height:10px;margin-left:6px"><svg style="position:absolute;left:0.7px;top:-4px" width="20" height="20" viewBox="0 0 20 20"><circle cx="10" cy="10" r="10" fill="#dce2ea"/><text x="10.3" y="13.2" text-anchor="middle" font-family="Liberation Sans" font-weight="700" font-size="16.5" fill="#232a35">a</text><path d="M5 13.7 Q10.3 16.9 15.4 13.6" stroke="#ff9d12" stroke-width="1.4" fill="none" stroke-linecap="round"/></svg></span></div>
<div class="t" style="right:1444.45px;top:975.13px;font-size:14.02px;line-height:14.02px;color:#4b596d;font-weight:400;letter-spacing:0.55px;">30</div>
<div class="t" style="right:1335.45px;top:975.13px;font-size:14.02px;line-height:14.02px;color:#4b596d;font-weight:400;letter-spacing:0.55px;">300</div>
<svg class="s" style="left:589px;top:971px;" width="24" height="24" viewBox="0 0 24 24"><g fill="none" stroke="#3b4c69" stroke-width="1.35" stroke-linecap="round" stroke-linejoin="round"><path d="M4.6 4.4 V16.3 Q4.6 17.3 5.6 17.3 H19.4"/><path d="M7.8 12.3 L11 8.9 L14 11.8 L18.4 7.3"/></g></svg>
<div class="t" style="right:1185.95px;top:975.13px;font-size:14.02px;line-height:14.02px;color:#2b3342;font-weight:400;letter-spacing:0.55px;">5%</div>
<svg class="s" style="left:735px;top:971px;" width="21" height="24" viewBox="0 0 21 24"><g fill="none" stroke="#27c07d" stroke-width="1.35" stroke-linecap="round" stroke-linejoin="round"><path d="M10.5 4.8V17.8 M6.5 8.7 L10.5 4.8 L14.5 8.7"/></g></svg>
<div class="t" style="right:1032.45px;top:975.13px;font-size:14.02px;line-height:14.02px;color:#4b596d;font-weight:400;letter-spacing:0.55px;">300</div>
<div class="t" style="right:894.45px;top:975.13px;font-size:14.02px;line-height:14.02px;color:#4b596d;font-weight:400;letter-spacing:0.55px;">>1,000</div>
<div class="t" style="right:757.45px;top:975.13px;font-size:14.02px;line-height:14.02px;color:#4b596d;font-weight:400;letter-spacing:0.55px;">0</div>
<div class="t" style="right:619.45px;top:975.13px;font-size:14.02px;line-height:14.02px;color:#4b596d;font-weight:400;letter-spacing:0.55px;">0</div>
<div class="mt" style="left:1346.5px;top:970px;background:#d9dfe8;color:#1b2130;line-height:24px">A</div>
<div class="mt" style="left:1379.5px;top:970px;border:1px solid #d3dae4;color:#a3b0c2">S</div>
<div class="mt" style="left:1412.5px;top:970px;background:#d9dfe8;color:#1b2130;line-height:24px">O</div>
<div class="t" style="right:345.45px;top:975.13px;font-size:14.02px;line-height:14.02px;color:#4b596d;font-weight:400;letter-spacing:0.55px;">-</div>
<div class="t" style="right:207.95px;top:975.13px;font-size:14.02px;line-height:14.02px;color:#4b596d;font-weight:400;letter-spacing:0.55px;">-</div>
<div class="t" style="right:70.45px;top:975.13px;font-size:14.02px;line-height:14.02px;color:#4b596d;font-weight:400;letter-spacing:0.55px;">18</div>
<div class="r" style="left:0;top:0;width:1905px;height:64px;background:#fff;box-shadow:0 3px 9px rgba(0,0,0,0.075);z-index:10"></div>
<svg class="s" style="left:14px;top:16px;z-index:11" width="32" height="32" viewBox="0 0 32 32"><path d="M4.1 9.2 L9.9 12.1 V16.9 H4.1 Z" fill="#2f60e2"/><path d="M13.1 12 L18.9 9.5 V16.9 H13.1 Z" fill="#2f60e2"/><path d="M22.1 7.4 L27.9 4.6 V16.9 H22.1 Z" fill="#2f60e2"/><rect x="4.1" y="20" width="5.8" height="7.6" fill="#0f2f6e"/><rect x="13.1" y="20" width="5.8" height="7.6" fill="#0f2f6e"/><rect x="22.1" y="20" width="5.8" height="7.6" fill="#0f2f6e"/></svg>
<div class="t" style="left:79.10px;top:24.91px;font-size:15.94px;line-height:15.94px;color:#4a4d52;font-weight:400;letter-spacing:0px;z-index:11;letter-spacing:0.33px">Dashboard</div>
<div class="t" style="left:262.10px;top:24.91px;font-size:15.94px;line-height:15.94px;color:#4a4d52;font-weight:400;letter-spacing:0px;z-index:11;letter-spacing:0.37px">Profits</div>
<div class="t" style="left:332.40px;top:24.91px;font-size:15.94px;line-height:15.94px;color:#4a4d52;font-weight:400;letter-spacing:0px;z-index:11;letter-spacing:0.6px">Follow-Up</div>
<div class="t" style="left:431.60px;top:24.91px;font-size:15.94px;line-height:15.94px;color:#4a4d52;font-weight:400;letter-spacing:0px;z-index:11;letter-spacing:0.52px">Adtomic</div>
<div class="t" style="left:515.60px;top:24.91px;font-size:15.94px;line-height:15.94px;color:#4a4d52;font-weight:400;letter-spacing:0px;z-index:11;letter-spacing:0.45px">Portals</div>
<div class="t" style="left:589.90px;top:24.91px;font-size:15.94px;line-height:15.94px;color:#4a4d52;font-weight:400;letter-spacing:0px;z-index:11;letter-spacing:0.28px">FBA Training</div>
<div class="t" style="left:183.00px;top:24.89px;font-size:14.66px;line-height:14.66px;color:#2c63e2;font-weight:700;letter-spacing:0px;z-index:11">Tools</div>
<svg class="s" style="left:225px;top:26px;z-index:11" width="15" height="12" viewBox="0 0 15 12"><path d="M2.9 4.6 L7.4 9.1 L11.9 4.6" fill="none" stroke="#2c63e2" stroke-width="1.7" stroke-linecap="round" stroke-linejoin="round"/></svg>
<div class="r" style="left:183px;top:62px;width:56px;height:5px;background:#2c63e2;border-radius:3px;z-index:12"></div>
<div class="t" style="left:1511.00px;top:24.03px;font-size:15.68px;line-height:15.68px;color:#363b42;font-weight:700;letter-spacing:0px;z-index:11">What’s New?</div>
<div class="r" style="left:1614px;top:23px;width:18px;height:18px;border-radius:50%;background:#cc1b0e;z-index:11;color:#fff;font-size:11px;font-weight:700;line-height:18px;text-align:center;font-family:'Liberation Sans'">2</div>
<svg class="s" style="left:1646px;top:19px;z-index:11" width="26" height="26" viewBox="0 0 26 26"><circle cx="10.9" cy="10.8" r="7.2" fill="none" stroke="#636466" stroke-width="3.1"/><path d="M16.4 16.4 L22.3 22.2" stroke="#636466" stroke-width="3.1" stroke-linecap="round"/></svg>
<svg class="s" style="left:1686px;top:21px;z-index:11" width="22" height="22" viewBox="0 0 22 22"><circle cx="11" cy="11" r="11" fill="#636466"/><text x="11" y="17" text-anchor="middle" font-family="Liberation Sans" font-weight="700" font-size="16.5" fill="#fff">?</text></svg>
<svg class="s" style="left:1725px;top:21px;z-index:11" width="22" height="22" viewBox="0 0 22 22"><circle cx="11" cy="11" r="10.7" fill="#636466"/><path d="M12.3 22 V13.6 H15 L15.4 10.5 H12.3 V8.6 Q12.3 7.3 13.6 7.3 H15.5 V4.6 Q14.4 4.4 13 4.4 Q9.1 4.4 9.1 8.3 V10.5 H6.4 V13.6 H9.1 V22 Z" fill="#fff"/></svg>
<div class="r" style="left:1764px;top:29px;width:6px;height:6px;border-radius:50%;background:#dcdcdc;z-index:11"></div>
<svg class="s" style="left:1785px;top:20px;z-index:11" width="22" height="24" viewBox="0 0 22 24"><path d="M10.5 1.1 Q11.5 1.1 11.5 2.2 V3.8 Q16.7 5 16.7 11 V14.5 L19.4 17.5 Q20 18.6 18.8 18.6 H2.2 Q1 18.6 1.6 17.5 L4.3 14.5 V11 Q4.3 5 9.5 3.8 V2.2 Q9.5 1.1 10.5 1.1 Z" fill="#636466"/><path d="M8 20.1 H13 Q12.5 22.7 10.5 22.7 Q8.5 22.7 8 20.1 Z" fill="#636466"/></svg>
<svg class="s" style="left:1821px;top:12px;z-index:11" width="40" height="40" viewBox="0 0 40 40"><circle cx="20" cy="20" r="20" fill="#12316e"/><path d="M7.7 12.9 L14 16.3 V20.8 H7.7 Z M16.95 16.3 L23 12.9 V20.8 H16.95 Z M26 11.1 L32.1 8.15 V20.8 H26 Z" fill="#fff"/><rect x="7.7" y="23.9" width="6.3" height="7.7" fill="#fff"/><rect x="16.95" y="23.9" width="6.05" height="7.7" fill="#fff"/><rect x="26" y="23.9" width="6.1" height="7.7" fill="#fff"/></svg>
<svg class="s" style="left:1869px;top:28px;z-index:11" width="14" height="10" viewBox="0 0 14 10"><path d="M1.5 1.8 H12.8 L7.15 8.8 Z" fill="#636466"/></svg>
<div class="r" style="left:1910px;top:210px;width:6px;height:292px;background:#687e9d;border-radius:3px;z-index:11"></div>
<div class="r" style="left:13px;top:952px;width:16px;height:16px;background:#5f6062;border-radius:3px;z-index:11"></div>
<svg class="s" style="left:13px;top:952px;z-index:11" width="16" height="16" viewBox="0 0 16 16"><path d="M11.6 5.4 A4.4 4.4 0 1 0 11.6 10.6" fill="none" stroke="#fbf8e6" stroke-width="2.3"/></svg>
<div class="r" style="left:1826px;top:895px;width:60px;height:60px;border-radius:50%;background:#0f3170;box-shadow:0 1px 6px rgba(0,0,0,0.06),0 2px 32px rgba(0,0,0,0.16);z-index:11"></div>
<svg class="s" style="left:1841px;top:908px;z-index:12" width="30" height="34" viewBox="0 0 30 34"><path d="M4 1 H26 Q29.5 1 29.5 4.5 V33 L22 29.5 H4 Q0.8 29.5 0.8 26.3 V4.2 Q0.8 1 4 1 Z" fill="#fff"/><path d="M5 21 Q15 27.5 25 21" fill="none" stroke="#0f3170" stroke-width="1.8" stroke-linecap="round"/></svg>
</body></html>
